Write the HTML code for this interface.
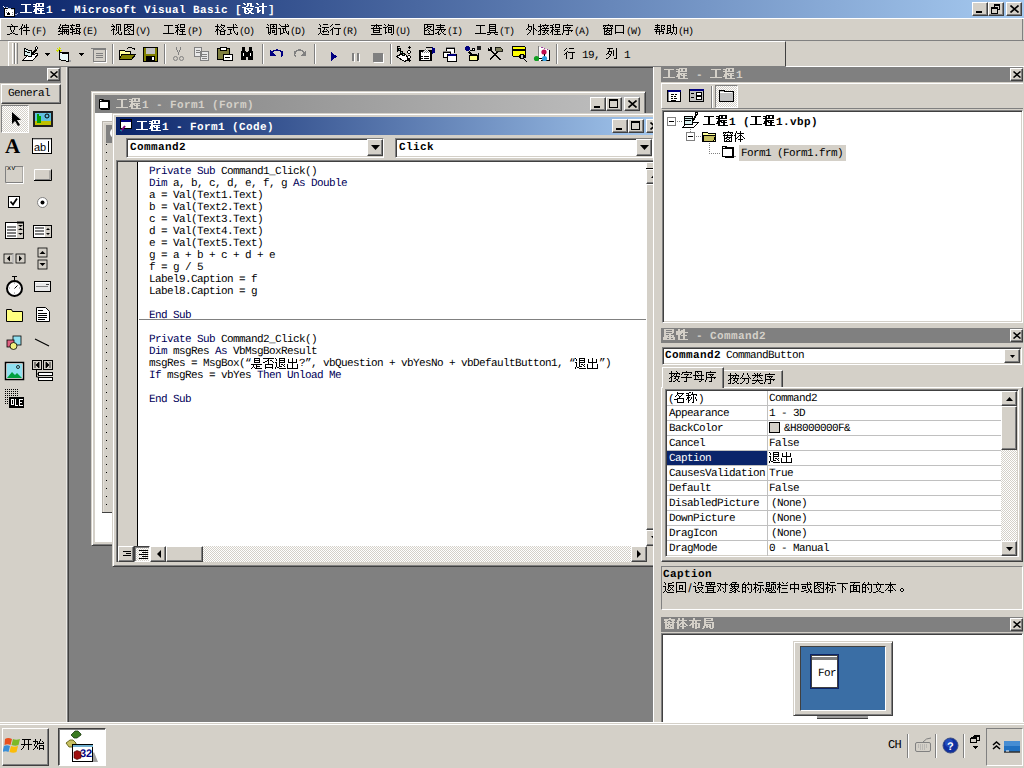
<!DOCTYPE html>
<html><head><meta charset="utf-8">
<style>
*{margin:0;padding:0;box-sizing:border-box}
html,body{text-rendering:geometricPrecision;width:1024px;height:768px;overflow:hidden;background:#D4D0C8;font-family:"Liberation Sans",sans-serif;font-size:12px;color:#000}
.a{position:absolute}
.m{font-family:"Liberation Mono",monospace}
.raised{background:#D4D0C8;border-top:1px solid #fff;border-left:1px solid #fff;border-right:1px solid #404040;border-bottom:1px solid #404040;box-shadow:inset -1px -1px 0 #808080}
.sunk{border-top:1px solid #808080;border-left:1px solid #808080;border-right:1px solid #fff;border-bottom:1px solid #fff;box-shadow:inset 1px 1px 0 #404040, inset -1px -1px 0 #D4D0C8}
.btn{background:#D4D0C8;border-top:1px solid #fff;border-left:1px solid #fff;border-right:1px solid #404040;border-bottom:1px solid #404040;box-shadow:inset -1px -1px 0 #808080}
.tbar{background:linear-gradient(to right,#0A246A,#A6CAF0);color:#fff;font-weight:bold}
.ibar{background:linear-gradient(to right,#808080,#C0C0C0);color:#D4D0C8;font-weight:bold}
.gbar{background:#808080;color:#D4D0C8;font-weight:bold}
.chk{background-color:#D4D0C8;background-image:linear-gradient(45deg,#fff 25%,transparent 25%,transparent 75%,#fff 75%),linear-gradient(45deg,#fff 25%,transparent 25%,transparent 75%,#fff 75%);background-size:2px 2px;background-position:0 0,1px 1px}
.code{font-family:"Liberation Mono",monospace;font-size:11px;letter-spacing:-0.6px;line-height:12px;white-space:pre;color:#000}
.kw{color:#000058}
.cj{display:inline-block;width:12px;font-family:"Liberation Sans",sans-serif;font-size:12px;letter-spacing:0;overflow:hidden;vertical-align:top;line-height:12px}
.mn{font-family:"Liberation Mono",monospace;font-size:10px;letter-spacing:-1px}
.pg{font-family:"Liberation Mono",monospace;font-size:11px;line-height:12px;letter-spacing:-0.6px;white-space:pre}
.pm{font-family:"Liberation Mono",monospace;font-size:11px;letter-spacing:-0.6px}
.tb{font-family:"Liberation Mono",monospace;font-size:11px;font-weight:bold;letter-spacing:0.4px;line-height:13px;white-space:pre}
.tr{font-family:"Liberation Mono",monospace;font-size:11px;letter-spacing:-0.6px;line-height:13px;white-space:pre}
.sep{width:2px;border-left:1px solid #808080;border-right:1px solid #fff}
.cg{display:inline-block;width:12px;height:12px;vertical-align:-2px;overflow:visible}.cgb{display:inline-block;width:13px;height:12px;vertical-align:-2px;overflow:visible}
</style></head><body>
<svg width="0" height="0" style="position:absolute"><defs><symbol id="g0" viewBox="0 0 14 12" width="14" height="12"><path d="M1 1h10v1h-10zM5 2h2v1h-2zM5 3h2v1h-2zM5 4h2v1h-2zM5 5h2v1h-2zM5 6h2v1h-2zM5 7h2v1h-2zM5 8h2v1h-2zM0 9h12v1h-12z" fill="currentColor"/></symbol><symbol id="g1" viewBox="0 0 14 12" width="14" height="12"><path d="M3 0h8v1h-8zM0 1h4v1h-4zM5 1h2v1h-2zM9 1h2v1h-2zM2 2h2v1h-2zM5 2h2v1h-2zM9 2h2v1h-2zM0 3h11v1h-11zM2 4h2v1h-2zM2 5h9v1h-9zM1 6h5v1h-5zM7 6h2v1h-2zM1 7h3v1h-3zM5 7h6v1h-6zM0 8h4v1h-4zM7 8h2v1h-2zM2 9h2v1h-2zM7 9h2v1h-2zM2 10h10v1h-10z" fill="currentColor"/></symbol><symbol id="g2" viewBox="0 0 14 12" width="14" height="12"><path d="M1 0h2v1h-2zM5 0h5v1h-5zM2 1h2v1h-2zM5 1h2v1h-2zM8 1h2v1h-2zM5 2h2v1h-2zM8 2h2v1h-2zM4 3h2v1h-2zM8 3h4v1h-4zM0 4h4v1h-4zM2 5h9v1h-9zM2 6h2v1h-2zM5 6h2v1h-2zM9 6h2v1h-2zM2 7h2v1h-2zM6 7h4v1h-4zM2 8h3v1h-3zM7 8h2v1h-2zM2 9h2v1h-2zM6 9h4v1h-4zM3 10h4v1h-4zM9 10h3v1h-3z" fill="currentColor"/></symbol><symbol id="g3" viewBox="0 0 14 12" width="14" height="12"><path d="M1 0h2v1h-2zM7 0h2v1h-2zM2 1h2v1h-2zM7 1h2v1h-2zM7 2h2v1h-2zM4 3h8v1h-8zM0 4h4v1h-4zM7 4h2v1h-2zM2 5h2v1h-2zM7 5h2v1h-2zM2 6h2v1h-2zM7 6h2v1h-2zM2 7h4v1h-4zM7 7h2v1h-2zM2 8h3v1h-3zM7 8h2v1h-2zM2 9h2v1h-2zM7 9h2v1h-2zM7 10h2v1h-2z" fill="currentColor"/></symbol><symbol id="g4" viewBox="0 0 14 12" width="14" height="12"><path d="M4 0h1v1h-1zM5 1h1v1h-1zM0 2h11v1h-11zM3 3h1v1h-1zM7 3h1v1h-1zM3 4h1v1h-1zM7 4h1v1h-1zM3 5h1v1h-1zM7 5h1v1h-1zM4 6h1v1h-1zM6 6h1v1h-1zM4 7h1v1h-1zM6 7h1v1h-1zM5 8h1v1h-1zM3 9h2v1h-2zM6 9h2v1h-2zM0 10h3v1h-3zM8 10h3v1h-3z" fill="currentColor"/></symbol><symbol id="g5" viewBox="0 0 14 12" width="14" height="12"><path d="M3 0h1v1h-1zM7 0h1v1h-1zM3 1h1v1h-1zM5 1h1v1h-1zM7 1h1v1h-1zM2 2h1v1h-1zM5 2h1v1h-1zM7 2h1v1h-1zM2 3h1v1h-1zM4 3h6v1h-6zM1 4h3v1h-3zM7 4h1v1h-1zM0 5h1v1h-1zM2 5h1v1h-1zM7 5h1v1h-1zM2 6h1v1h-1zM4 6h7v1h-7zM2 7h1v1h-1zM7 7h1v1h-1zM2 8h1v1h-1zM7 8h1v1h-1zM2 9h1v1h-1zM7 9h1v1h-1zM2 10h1v1h-1zM7 10h1v1h-1z" fill="currentColor"/></symbol><symbol id="g6" viewBox="0 0 14 12" width="14" height="12"><path d="M2 0h1v1h-1zM7 0h1v1h-1zM2 1h1v1h-1zM4 1h7v1h-7zM1 2h1v1h-1zM4 2h1v1h-1zM10 2h1v1h-1zM1 3h1v1h-1zM3 3h8v1h-8zM0 4h3v1h-3zM4 4h1v1h-1zM2 5h1v1h-1zM4 5h7v1h-7zM1 6h1v1h-1zM4 6h1v1h-1zM6 6h1v1h-1zM8 6h1v1h-1zM10 6h1v1h-1zM0 7h11v1h-11zM4 8h1v1h-1zM6 8h1v1h-1zM8 8h1v1h-1zM10 8h1v1h-1zM2 9h3v1h-3zM6 9h1v1h-1zM8 9h1v1h-1zM10 9h1v1h-1zM0 10h2v1h-2zM4 10h1v1h-1zM9 10h2v1h-2z" fill="currentColor"/></symbol><symbol id="g7" viewBox="0 0 14 12" width="14" height="12"><path d="M2 0h1v1h-1zM6 0h4v1h-4zM0 1h5v1h-5zM6 1h1v1h-1zM9 1h1v1h-1zM1 2h1v1h-1zM6 2h4v1h-4zM1 3h2v1h-2zM0 4h1v1h-1zM2 4h1v1h-1zM5 4h6v1h-6zM0 5h5v1h-5zM6 5h1v1h-1zM9 5h1v1h-1zM2 6h1v1h-1zM6 6h2v1h-2zM9 6h1v1h-1zM2 7h3v1h-3zM6 7h1v1h-1zM8 7h2v1h-2zM0 8h3v1h-3zM6 8h1v1h-1zM9 8h2v1h-2zM2 9h1v1h-1zM4 9h6v1h-6zM2 10h1v1h-1zM9 10h1v1h-1z" fill="currentColor"/></symbol><symbol id="g8" viewBox="0 0 14 12" width="14" height="12"><path d="M1 0h1v1h-1zM5 0h5v1h-5zM2 1h1v1h-1zM5 1h1v1h-1zM9 1h1v1h-1zM0 2h4v1h-4zM5 2h1v1h-1zM7 2h1v1h-1zM9 2h1v1h-1zM3 3h1v1h-1zM5 3h1v1h-1zM7 3h1v1h-1zM9 3h1v1h-1zM2 4h1v1h-1zM5 4h1v1h-1zM7 4h1v1h-1zM9 4h1v1h-1zM1 5h3v1h-3zM5 5h1v1h-1zM7 5h1v1h-1zM9 5h1v1h-1zM0 6h1v1h-1zM2 6h1v1h-1zM5 6h1v1h-1zM7 6h1v1h-1zM9 6h1v1h-1zM2 7h1v1h-1zM7 7h1v1h-1zM2 8h1v1h-1zM6 8h2v1h-2zM10 8h1v1h-1zM2 9h1v1h-1zM5 9h1v1h-1zM7 9h1v1h-1zM10 9h1v1h-1zM2 10h1v1h-1zM4 10h1v1h-1zM8 10h3v1h-3z" fill="currentColor"/></symbol><symbol id="g9" viewBox="0 0 14 12" width="14" height="12"><path d="M1 0h10v1h-10zM1 1h1v1h-1zM4 1h1v1h-1zM10 1h1v1h-1zM1 2h1v1h-1zM4 2h5v1h-5zM10 2h1v1h-1zM1 3h1v1h-1zM3 3h2v1h-2zM7 3h1v1h-1zM10 3h1v1h-1zM1 4h2v1h-2zM5 4h2v1h-2zM10 4h1v1h-1zM1 5h1v1h-1zM4 5h1v1h-1zM7 5h1v1h-1zM10 5h1v1h-1zM1 6h3v1h-3zM5 6h1v1h-1zM8 6h3v1h-3zM1 7h1v1h-1zM6 7h1v1h-1zM10 7h1v1h-1zM1 8h1v1h-1zM5 8h1v1h-1zM10 8h1v1h-1zM1 9h1v1h-1zM6 9h1v1h-1zM10 9h1v1h-1zM1 10h10v1h-10z" fill="currentColor"/></symbol><symbol id="g10" viewBox="0 0 14 12" width="14" height="12"><path d="M1 1h9v1h-9zM5 2h1v1h-1zM5 3h1v1h-1zM5 4h1v1h-1zM5 5h1v1h-1zM5 6h1v1h-1zM5 7h1v1h-1zM5 8h1v1h-1zM0 9h11v1h-11z" fill="currentColor"/></symbol><symbol id="g11" viewBox="0 0 14 12" width="14" height="12"><path d="M3 0h1v1h-1zM5 0h5v1h-5zM0 1h3v1h-3zM5 1h1v1h-1zM9 1h1v1h-1zM2 2h1v1h-1zM5 2h1v1h-1zM9 2h1v1h-1zM0 3h4v1h-4zM5 3h5v1h-5zM2 4h1v1h-1zM2 5h2v1h-2zM5 5h5v1h-5zM1 6h2v1h-2zM4 6h1v1h-1zM7 6h1v1h-1zM1 7h2v1h-2zM5 7h5v1h-5zM0 8h1v1h-1zM2 8h1v1h-1zM7 8h1v1h-1zM2 9h1v1h-1zM7 9h1v1h-1zM2 10h1v1h-1zM4 10h7v1h-7z" fill="currentColor"/></symbol><symbol id="g12" viewBox="0 0 14 12" width="14" height="12"><path d="M2 0h1v1h-1zM6 0h1v1h-1zM2 1h1v1h-1zM6 1h4v1h-4zM0 2h4v1h-4zM5 2h1v1h-1zM9 2h1v1h-1zM2 3h1v1h-1zM4 3h1v1h-1zM6 3h1v1h-1zM8 3h1v1h-1zM2 4h1v1h-1zM7 4h1v1h-1zM1 5h3v1h-3zM6 5h1v1h-1zM8 5h1v1h-1zM1 6h2v1h-2zM4 6h2v1h-2zM9 6h2v1h-2zM0 7h1v1h-1zM2 7h1v1h-1zM5 7h5v1h-5zM2 8h1v1h-1zM5 8h1v1h-1zM9 8h1v1h-1zM2 9h1v1h-1zM5 9h1v1h-1zM9 9h1v1h-1zM2 10h1v1h-1zM5 10h5v1h-5z" fill="currentColor"/></symbol><symbol id="g13" viewBox="0 0 14 12" width="14" height="12"><path d="M6 0h1v1h-1zM8 0h1v1h-1zM6 1h1v1h-1zM9 1h1v1h-1zM6 2h1v1h-1zM0 3h11v1h-11zM6 4h1v1h-1zM1 5h4v1h-4zM6 5h1v1h-1zM3 6h1v1h-1zM6 6h1v1h-1zM3 7h1v1h-1zM7 7h1v1h-1zM3 8h1v1h-1zM7 8h1v1h-1zM10 8h1v1h-1zM3 9h2v1h-2zM8 9h1v1h-1zM10 9h1v1h-1zM0 10h3v1h-3zM9 10h2v1h-2z" fill="currentColor"/></symbol><symbol id="g14" viewBox="0 0 14 12" width="14" height="12"><path d="M1 0h1v1h-1zM4 0h7v1h-7zM2 1h1v1h-1zM4 1h1v1h-1zM7 1h1v1h-1zM10 1h1v1h-1zM4 2h1v1h-1zM6 2h3v1h-3zM10 2h1v1h-1zM0 3h3v1h-3zM4 3h1v1h-1zM7 3h1v1h-1zM10 3h1v1h-1zM2 4h1v1h-1zM4 4h7v1h-7zM2 5h1v1h-1zM4 5h1v1h-1zM10 5h1v1h-1zM2 6h1v1h-1zM4 6h1v1h-1zM6 6h3v1h-3zM10 6h1v1h-1zM2 7h1v1h-1zM4 7h1v1h-1zM6 7h1v1h-1zM8 7h1v1h-1zM10 7h1v1h-1zM2 8h3v1h-3zM6 8h3v1h-3zM10 8h1v1h-1zM2 9h1v1h-1zM4 9h1v1h-1zM10 9h1v1h-1zM3 10h1v1h-1zM8 10h3v1h-3z" fill="currentColor"/></symbol><symbol id="g15" viewBox="0 0 14 12" width="14" height="12"><path d="M1 0h1v1h-1zM7 0h1v1h-1zM9 0h1v1h-1zM2 1h1v1h-1zM7 1h1v1h-1zM10 1h1v1h-1zM3 2h8v1h-8zM7 3h1v1h-1zM0 4h3v1h-3zM4 4h4v1h-4zM2 5h1v1h-1zM5 5h1v1h-1zM7 5h1v1h-1zM2 6h1v1h-1zM5 6h1v1h-1zM7 6h1v1h-1zM2 7h1v1h-1zM5 7h1v1h-1zM8 7h1v1h-1zM10 7h1v1h-1zM2 8h1v1h-1zM5 8h2v1h-2zM8 8h1v1h-1zM10 8h1v1h-1zM2 9h3v1h-3zM9 9h2v1h-2zM2 10h1v1h-1zM10 10h1v1h-1z" fill="currentColor"/></symbol><symbol id="g16" viewBox="0 0 14 12" width="14" height="12"><path d="M1 0h1v1h-1zM5 0h5v1h-5zM2 1h1v1h-1zM2 2h1v1h-1zM4 3h7v1h-7zM0 4h3v1h-3zM6 4h1v1h-1zM2 5h1v1h-1zM6 5h1v1h-1zM8 5h1v1h-1zM2 6h1v1h-1zM5 6h1v1h-1zM9 6h1v1h-1zM2 7h1v1h-1zM4 7h5v1h-5zM10 7h1v1h-1zM2 8h1v1h-1zM5 8h1v1h-1zM10 8h1v1h-1zM1 9h1v1h-1zM3 9h1v1h-1zM0 10h1v1h-1zM4 10h7v1h-7z" fill="currentColor"/></symbol><symbol id="g17" viewBox="0 0 14 12" width="14" height="12"><path d="M2 0h1v1h-1zM5 0h5v1h-5zM1 1h1v1h-1zM0 2h1v1h-1zM3 3h1v1h-1zM2 4h1v1h-1zM4 4h7v1h-7zM1 5h2v1h-2zM8 5h1v1h-1zM0 6h1v1h-1zM2 6h1v1h-1zM8 6h1v1h-1zM2 7h1v1h-1zM8 7h1v1h-1zM2 8h1v1h-1zM8 8h1v1h-1zM2 9h1v1h-1zM8 9h1v1h-1zM2 10h1v1h-1zM6 10h3v1h-3z" fill="currentColor"/></symbol><symbol id="g18" viewBox="0 0 14 12" width="14" height="12"><path d="M5 0h1v1h-1zM0 1h11v1h-11zM3 2h1v1h-1zM5 2h1v1h-1zM7 2h1v1h-1zM2 3h1v1h-1zM5 3h1v1h-1zM8 3h1v1h-1zM0 4h11v1h-11zM2 5h1v1h-1zM8 5h1v1h-1zM2 6h7v1h-7zM2 7h1v1h-1zM8 7h1v1h-1zM2 8h7v1h-7zM0 10h11v1h-11z" fill="currentColor"/></symbol><symbol id="g19" viewBox="0 0 14 12" width="14" height="12"><path d="M1 0h1v1h-1zM5 0h1v1h-1zM2 1h1v1h-1zM5 1h6v1h-6zM4 2h1v1h-1zM10 2h1v1h-1zM0 3h4v1h-4zM5 3h4v1h-4zM10 3h1v1h-1zM2 4h1v1h-1zM5 4h1v1h-1zM8 4h1v1h-1zM10 4h1v1h-1zM2 5h1v1h-1zM5 5h4v1h-4zM10 5h1v1h-1zM2 6h1v1h-1zM5 6h1v1h-1zM8 6h1v1h-1zM10 6h1v1h-1zM2 7h1v1h-1zM5 7h1v1h-1zM8 7h1v1h-1zM10 7h1v1h-1zM2 8h2v1h-2zM5 8h4v1h-4zM10 8h1v1h-1zM2 9h1v1h-1zM10 9h1v1h-1zM8 10h2v1h-2z" fill="currentColor"/></symbol><symbol id="g20" viewBox="0 0 14 12" width="14" height="12"><path d="M5 0h1v1h-1zM1 1h9v1h-9zM5 2h1v1h-1zM2 3h7v1h-7zM5 4h1v1h-1zM0 5h11v1h-11zM4 6h1v1h-1zM6 6h1v1h-1zM9 6h1v1h-1zM3 7h1v1h-1zM6 7h1v1h-1zM8 7h1v1h-1zM2 8h2v1h-2zM7 8h1v1h-1zM0 9h2v1h-2zM3 9h1v1h-1zM5 9h1v1h-1zM8 9h1v1h-1zM3 10h2v1h-2zM9 10h2v1h-2z" fill="currentColor"/></symbol><symbol id="g21" viewBox="0 0 14 12" width="14" height="12"><path d="M2 0h7v1h-7zM2 1h1v1h-1zM8 1h1v1h-1zM2 2h7v1h-7zM2 3h1v1h-1zM8 3h1v1h-1zM2 4h7v1h-7zM2 5h1v1h-1zM8 5h1v1h-1zM2 6h7v1h-7zM2 7h1v1h-1zM8 7h1v1h-1zM0 8h11v1h-11zM3 9h1v1h-1zM7 9h1v1h-1zM0 10h3v1h-3zM8 10h3v1h-3z" fill="currentColor"/></symbol><symbol id="g22" viewBox="0 0 14 12" width="14" height="12"><path d="M2 0h1v1h-1zM7 0h1v1h-1zM2 1h1v1h-1zM7 1h1v1h-1zM2 2h4v1h-4zM7 2h1v1h-1zM2 3h1v1h-1zM5 3h1v1h-1zM7 3h1v1h-1zM1 4h1v1h-1zM5 4h1v1h-1zM7 4h2v1h-2zM0 5h1v1h-1zM2 5h1v1h-1zM5 5h1v1h-1zM7 5h1v1h-1zM9 5h1v1h-1zM3 6h2v1h-2zM7 6h1v1h-1zM10 6h1v1h-1zM4 7h1v1h-1zM7 7h1v1h-1zM3 8h1v1h-1zM7 8h1v1h-1zM2 9h1v1h-1zM7 9h1v1h-1zM1 10h1v1h-1zM7 10h1v1h-1z" fill="currentColor"/></symbol><symbol id="g23" viewBox="0 0 14 12" width="14" height="12"><path d="M2 0h1v1h-1zM7 0h1v1h-1zM2 1h1v1h-1zM4 1h7v1h-7zM0 2h4v1h-4zM5 2h1v1h-1zM9 2h1v1h-1zM2 3h1v1h-1zM6 3h1v1h-1zM8 3h1v1h-1zM2 4h1v1h-1zM4 4h7v1h-7zM2 5h2v1h-2zM7 5h1v1h-1zM1 6h2v1h-2zM4 6h7v1h-7zM0 7h1v1h-1zM2 7h1v1h-1zM6 7h1v1h-1zM9 7h1v1h-1zM2 8h1v1h-1zM5 8h2v1h-2zM8 8h1v1h-1zM2 9h1v1h-1zM7 9h1v1h-1zM9 9h1v1h-1zM0 10h3v1h-3zM4 10h3v1h-3zM10 10h1v1h-1z" fill="currentColor"/></symbol><symbol id="g24" viewBox="0 0 14 12" width="14" height="12"><path d="M5 0h1v1h-1zM1 1h10v1h-10zM1 2h1v1h-1zM1 3h1v1h-1zM3 3h6v1h-6zM1 4h1v1h-1zM5 4h1v1h-1zM7 4h1v1h-1zM1 5h1v1h-1zM6 5h1v1h-1zM1 6h10v1h-10zM1 7h1v1h-1zM6 7h1v1h-1zM9 7h1v1h-1zM1 8h1v1h-1zM6 8h1v1h-1zM0 9h1v1h-1zM6 9h1v1h-1zM0 10h1v1h-1zM4 10h3v1h-3z" fill="currentColor"/></symbol><symbol id="g25" viewBox="0 0 14 12" width="14" height="12"><path d="M6 0h1v1h-1zM1 1h10v1h-10zM1 2h1v1h-1zM3 2h1v1h-1zM8 2h1v1h-1zM10 2h1v1h-1zM2 3h1v1h-1zM5 3h1v1h-1zM9 3h1v1h-1zM1 4h10v1h-10zM2 5h1v1h-1zM5 5h1v1h-1zM9 5h1v1h-1zM2 6h1v1h-1zM4 6h6v1h-6zM2 7h3v1h-3zM7 7h1v1h-1zM9 7h1v1h-1zM2 8h1v1h-1zM5 8h2v1h-2zM9 8h1v1h-1zM2 9h1v1h-1zM4 9h1v1h-1zM7 9h1v1h-1zM9 9h1v1h-1zM2 10h8v1h-8z" fill="currentColor"/></symbol><symbol id="g26" viewBox="0 0 14 12" width="14" height="12"><path d="M1 1h9v1h-9zM1 2h1v1h-1zM9 2h1v1h-1zM1 3h1v1h-1zM9 3h1v1h-1zM1 4h1v1h-1zM9 4h1v1h-1zM1 5h1v1h-1zM9 5h1v1h-1zM1 6h1v1h-1zM9 6h1v1h-1zM1 7h1v1h-1zM9 7h1v1h-1zM1 8h9v1h-9zM1 9h1v1h-1zM9 9h1v1h-1z" fill="currentColor"/></symbol><symbol id="g27" viewBox="0 0 14 12" width="14" height="12"><path d="M3 0h1v1h-1zM1 1h5v1h-5zM7 1h4v1h-4zM3 2h1v1h-1zM7 2h1v1h-1zM10 2h1v1h-1zM1 3h5v1h-5zM7 3h1v1h-1zM9 3h1v1h-1zM3 4h1v1h-1zM7 4h1v1h-1zM10 4h1v1h-1zM0 5h6v1h-6zM7 5h4v1h-4zM2 6h1v1h-1zM5 6h1v1h-1zM7 6h1v1h-1zM1 7h9v1h-9zM2 8h1v1h-1zM5 8h1v1h-1zM9 8h1v1h-1zM2 9h1v1h-1zM5 9h1v1h-1zM8 9h2v1h-2zM5 10h1v1h-1z" fill="currentColor"/></symbol><symbol id="g28" viewBox="0 0 14 12" width="14" height="12"><path d="M7 0h1v1h-1zM1 1h4v1h-4zM7 1h1v1h-1zM1 2h1v1h-1zM4 2h1v1h-1zM7 2h1v1h-1zM1 3h1v1h-1zM4 3h1v1h-1zM6 3h5v1h-5zM1 4h4v1h-4zM7 4h1v1h-1zM10 4h1v1h-1zM1 5h1v1h-1zM4 5h1v1h-1zM7 5h1v1h-1zM10 5h1v1h-1zM1 6h4v1h-4zM7 6h1v1h-1zM10 6h1v1h-1zM1 7h1v1h-1zM4 7h1v1h-1zM7 7h1v1h-1zM10 7h1v1h-1zM1 8h1v1h-1zM3 8h4v1h-4zM10 8h1v1h-1zM0 9h3v1h-3zM6 9h1v1h-1zM8 9h1v1h-1zM10 9h1v1h-1zM5 10h1v1h-1zM9 10h1v1h-1z" fill="currentColor"/></symbol><symbol id="g29" viewBox="0 0 14 12" width="14" height="12"><path d="M1 0h6v1h-6zM10 0h1v1h-1zM3 1h1v1h-1zM10 1h1v1h-1zM3 2h1v1h-1zM7 2h1v1h-1zM10 2h1v1h-1zM2 3h4v1h-4zM7 3h1v1h-1zM10 3h1v1h-1zM2 4h1v1h-1zM5 4h1v1h-1zM7 4h1v1h-1zM10 4h1v1h-1zM1 5h2v1h-2zM5 5h1v1h-1zM7 5h1v1h-1zM10 5h1v1h-1zM0 6h1v1h-1zM3 6h2v1h-2zM7 6h1v1h-1zM10 6h1v1h-1zM4 7h1v1h-1zM7 7h1v1h-1zM10 7h1v1h-1zM3 8h1v1h-1zM10 8h1v1h-1zM2 9h1v1h-1zM10 9h1v1h-1zM0 10h2v1h-2zM8 10h3v1h-3z" fill="currentColor"/></symbol><symbol id="g30" viewBox="0 0 14 12" width="14" height="12"><path d="M3 0h6v1h-6zM3 1h1v1h-1zM8 1h1v1h-1zM3 2h6v1h-6zM3 3h1v1h-1zM8 3h1v1h-1zM3 4h6v1h-6zM0 6h11v1h-11zM2 7h1v1h-1zM5 7h1v1h-1zM2 8h1v1h-1zM5 8h4v1h-4zM1 9h1v1h-1zM3 9h1v1h-1zM5 9h1v1h-1zM0 10h1v1h-1zM4 10h7v1h-7z" fill="currentColor"/></symbol><symbol id="g31" viewBox="0 0 14 12" width="14" height="12"><path d="M0 0h11v1h-11zM5 1h1v1h-1zM4 2h2v1h-2zM7 2h2v1h-2zM2 3h2v1h-2zM5 3h1v1h-1zM9 3h1v1h-1zM0 4h2v1h-2zM5 4h1v1h-1zM10 4h1v1h-1zM5 5h1v1h-1zM2 6h8v1h-8zM2 7h1v1h-1zM9 7h1v1h-1zM2 8h1v1h-1zM9 8h1v1h-1zM2 9h8v1h-8zM2 10h1v1h-1zM9 10h1v1h-1z" fill="currentColor"/></symbol><symbol id="g32" viewBox="0 0 14 12" width="14" height="12"><path d="M0 0h1v1h-1zM4 0h6v1h-6zM1 1h1v1h-1zM4 1h1v1h-1zM9 1h1v1h-1zM1 2h1v1h-1zM4 2h6v1h-6zM4 3h1v1h-1zM9 3h1v1h-1zM0 4h2v1h-2zM4 4h6v1h-6zM1 5h1v1h-1zM4 5h1v1h-1zM1 6h1v1h-1zM4 6h1v1h-1zM6 6h2v1h-2zM9 6h1v1h-1zM1 7h1v1h-1zM4 7h1v1h-1zM8 7h1v1h-1zM1 8h1v1h-1zM4 8h3v1h-3zM9 8h1v1h-1zM0 9h1v1h-1zM2 9h2v1h-2zM0 10h1v1h-1zM4 10h7v1h-7z" fill="currentColor"/></symbol><symbol id="g33" viewBox="0 0 14 12" width="14" height="12"><path d="M5 0h1v1h-1zM1 1h1v1h-1zM5 1h1v1h-1zM9 1h1v1h-1zM1 2h1v1h-1zM5 2h1v1h-1zM9 2h1v1h-1zM1 3h1v1h-1zM5 3h1v1h-1zM9 3h1v1h-1zM1 4h9v1h-9zM5 5h1v1h-1zM0 6h1v1h-1zM5 6h1v1h-1zM10 6h1v1h-1zM0 7h1v1h-1zM5 7h1v1h-1zM10 7h1v1h-1zM0 8h1v1h-1zM5 8h1v1h-1zM10 8h1v1h-1zM0 9h1v1h-1zM5 9h1v1h-1zM10 9h1v1h-1zM0 10h11v1h-11z" fill="currentColor"/></symbol><symbol id="g34" viewBox="0 0 14 12" width="14" height="12"><path d="M2 0h1v1h-1zM6 0h1v1h-1zM2 1h1v1h-1zM6 1h1v1h-1zM1 2h1v1h-1zM3 2h7v1h-7zM1 3h1v1h-1zM6 3h1v1h-1zM0 4h2v1h-2zM5 4h3v1h-3zM1 5h1v1h-1zM4 5h1v1h-1zM6 5h1v1h-1zM8 5h1v1h-1zM1 6h1v1h-1zM3 6h1v1h-1zM6 6h1v1h-1zM9 6h1v1h-1zM1 7h2v1h-2zM6 7h1v1h-1zM10 7h1v1h-1zM1 8h1v1h-1zM4 8h5v1h-5zM1 9h1v1h-1zM6 9h1v1h-1zM1 10h1v1h-1zM6 10h1v1h-1z" fill="currentColor"/></symbol><symbol id="g35" viewBox="0 0 14 12" width="14" height="12"><path d="M1 0h10v1h-10zM1 1h2v1h-2zM9 1h2v1h-2zM1 2h10v1h-10zM1 3h2v1h-2zM9 3h2v1h-2zM1 4h9v1h-9zM1 5h2v1h-2zM6 5h2v1h-2zM1 6h10v1h-10zM1 7h4v1h-4zM6 7h2v1h-2zM9 7h2v1h-2zM0 8h12v1h-12zM0 9h4v1h-4zM6 9h2v1h-2zM10 9h2v1h-2zM0 10h12v1h-12z" fill="currentColor"/></symbol><symbol id="g36" viewBox="0 0 14 12" width="14" height="12"><path d="M2 0h2v1h-2zM7 0h2v1h-2zM2 1h2v1h-2zM5 1h4v1h-4zM0 2h9v1h-9zM0 3h12v1h-12zM0 4h6v1h-6zM7 4h2v1h-2zM0 5h5v1h-5zM7 5h2v1h-2zM2 6h2v1h-2zM5 6h6v1h-6zM2 7h2v1h-2zM7 7h2v1h-2zM2 8h2v1h-2zM7 8h2v1h-2zM2 9h2v1h-2zM7 9h2v1h-2zM2 10h10v1h-10z" fill="currentColor"/></symbol><symbol id="g37" viewBox="0 0 14 12" width="14" height="12"><path d="M2 0h1v1h-1zM7 0h1v1h-1zM2 1h1v1h-1zM8 1h1v1h-1zM0 2h11v1h-11zM2 3h1v1h-1zM5 3h1v1h-1zM7 3h1v1h-1zM10 3h1v1h-1zM2 4h1v1h-1zM4 4h1v1h-1zM7 4h1v1h-1zM2 5h2v1h-2zM5 5h6v1h-6zM1 6h2v1h-2zM6 6h1v1h-1zM9 6h1v1h-1zM0 7h1v1h-1zM2 7h1v1h-1zM5 7h2v1h-2zM9 7h1v1h-1zM2 8h1v1h-1zM7 8h2v1h-2zM2 9h1v1h-1zM6 9h1v1h-1zM8 9h1v1h-1zM0 10h3v1h-3zM4 10h2v1h-2zM9 10h2v1h-2z" fill="currentColor"/></symbol><symbol id="g38" viewBox="0 0 14 12" width="14" height="12"><path d="M3 0h1v1h-1zM7 0h1v1h-1zM3 1h1v1h-1zM7 1h1v1h-1zM2 2h1v1h-1zM8 2h1v1h-1zM2 3h1v1h-1zM8 3h1v1h-1zM1 4h1v1h-1zM9 4h1v1h-1zM0 5h1v1h-1zM2 5h7v1h-7zM10 5h1v1h-1zM4 6h1v1h-1zM8 6h1v1h-1zM4 7h1v1h-1zM8 7h1v1h-1zM3 8h1v1h-1zM8 8h1v1h-1zM2 9h1v1h-1zM8 9h1v1h-1zM0 10h2v1h-2zM6 10h2v1h-2z" fill="currentColor"/></symbol><symbol id="g39" viewBox="0 0 14 12" width="14" height="12"><path d="M2 0h1v1h-1zM5 0h1v1h-1zM8 0h1v1h-1zM3 1h1v1h-1zM5 1h1v1h-1zM7 1h1v1h-1zM0 2h11v1h-11zM3 3h1v1h-1zM5 3h1v1h-1zM7 3h1v1h-1zM2 4h1v1h-1zM5 4h1v1h-1zM8 4h1v1h-1zM1 5h1v1h-1zM9 5h1v1h-1zM5 6h1v1h-1zM0 7h11v1h-11zM4 8h1v1h-1zM6 8h1v1h-1zM3 9h1v1h-1zM7 9h1v1h-1zM0 10h3v1h-3zM8 10h3v1h-3z" fill="currentColor"/></symbol><symbol id="g40" viewBox="0 0 14 12" width="14" height="12"><path d="M5 0h1v1h-1zM1 1h10v1h-10zM1 2h1v1h-1zM10 2h1v1h-1zM0 3h1v1h-1zM3 3h5v1h-5zM9 3h1v1h-1zM6 4h1v1h-1zM5 5h1v1h-1zM0 6h11v1h-11zM5 7h1v1h-1zM5 8h1v1h-1zM5 9h1v1h-1zM3 10h3v1h-3z" fill="currentColor"/></symbol><symbol id="g41" viewBox="0 0 14 12" width="14" height="12"><path d="M2 0h7v1h-7zM2 1h1v1h-1zM4 1h1v1h-1zM8 1h1v1h-1zM2 2h1v1h-1zM5 2h1v1h-1zM8 2h1v1h-1zM2 3h1v1h-1zM8 3h1v1h-1zM0 4h11v1h-11zM2 5h1v1h-1zM4 5h1v1h-1zM8 5h1v1h-1zM2 6h1v1h-1zM5 6h1v1h-1zM8 6h1v1h-1zM2 7h1v1h-1zM8 7h1v1h-1zM1 8h10v1h-10zM8 9h1v1h-1zM6 10h2v1h-2z" fill="currentColor"/></symbol><symbol id="g42" viewBox="0 0 14 12" width="14" height="12"><path d="M3 0h1v1h-1zM3 1h7v1h-7zM3 2h1v1h-1zM8 2h1v1h-1zM2 3h1v1h-1zM4 3h1v1h-1zM7 3h1v1h-1zM1 4h1v1h-1zM5 4h2v1h-2zM5 5h1v1h-1zM3 6h7v1h-7zM0 7h4v1h-4zM9 7h1v1h-1zM3 8h1v1h-1zM9 8h1v1h-1zM3 9h1v1h-1zM9 9h1v1h-1zM3 10h7v1h-7z" fill="currentColor"/></symbol><symbol id="g43" viewBox="0 0 14 12" width="14" height="12"><path d="M3 0h2v1h-2zM6 0h1v1h-1zM0 1h3v1h-3zM6 1h1v1h-1zM2 2h1v1h-1zM5 2h6v1h-6zM0 3h5v1h-5zM7 3h1v1h-1zM10 3h1v1h-1zM2 4h1v1h-1zM7 4h1v1h-1zM1 5h3v1h-3zM5 5h1v1h-1zM7 5h1v1h-1zM9 5h1v1h-1zM1 6h2v1h-2zM5 6h1v1h-1zM7 6h1v1h-1zM9 6h1v1h-1zM0 7h1v1h-1zM2 7h1v1h-1zM4 7h1v1h-1zM7 7h1v1h-1zM10 7h1v1h-1zM2 8h2v1h-2zM7 8h1v1h-1zM10 8h1v1h-1zM2 9h1v1h-1zM7 9h1v1h-1zM2 10h1v1h-1zM6 10h2v1h-2z" fill="currentColor"/></symbol><symbol id="g44" viewBox="0 0 14 12" width="14" height="12"><path d="M1 0h1v1h-1zM9 0h2v1h-2zM2 1h1v1h-1zM5 1h4v1h-4zM2 2h1v1h-1zM5 2h1v1h-1zM5 3h6v1h-6zM0 4h3v1h-3zM5 4h2v1h-2zM10 4h1v1h-1zM2 5h1v1h-1zM5 5h1v1h-1zM7 5h1v1h-1zM9 5h1v1h-1zM2 6h1v1h-1zM5 6h1v1h-1zM8 6h1v1h-1zM2 7h1v1h-1zM4 7h1v1h-1zM7 7h1v1h-1zM9 7h1v1h-1zM2 8h1v1h-1zM5 8h2v1h-2zM10 8h1v1h-1zM1 9h1v1h-1zM3 9h1v1h-1zM0 10h1v1h-1zM4 10h7v1h-7z" fill="currentColor"/></symbol><symbol id="g45" viewBox="0 0 14 12" width="14" height="12"><path d="M1 0h10v1h-10zM1 1h1v1h-1zM10 1h1v1h-1zM1 2h1v1h-1zM10 2h1v1h-1zM1 3h1v1h-1zM4 3h4v1h-4zM10 3h1v1h-1zM1 4h1v1h-1zM4 4h1v1h-1zM7 4h1v1h-1zM10 4h1v1h-1zM1 5h1v1h-1zM4 5h1v1h-1zM7 5h1v1h-1zM10 5h1v1h-1zM1 6h1v1h-1zM4 6h4v1h-4zM10 6h1v1h-1zM1 7h1v1h-1zM4 7h1v1h-1zM7 7h1v1h-1zM10 7h1v1h-1zM1 8h1v1h-1zM10 8h1v1h-1zM1 9h10v1h-10zM1 10h1v1h-1zM10 10h1v1h-1z" fill="currentColor"/></symbol><symbol id="g46" viewBox="0 0 14 12" width="14" height="12"><path d="M1 0h1v1h-1zM5 0h4v1h-4zM2 1h1v1h-1zM5 1h1v1h-1zM8 1h1v1h-1zM5 2h1v1h-1zM8 2h1v1h-1zM4 3h1v1h-1zM8 3h3v1h-3zM0 4h3v1h-3zM2 5h1v1h-1zM4 5h6v1h-6zM2 6h1v1h-1zM5 6h1v1h-1zM9 6h1v1h-1zM2 7h1v1h-1zM6 7h1v1h-1zM8 7h1v1h-1zM2 8h2v1h-2zM7 8h1v1h-1zM2 9h1v1h-1zM6 9h1v1h-1zM8 9h1v1h-1zM3 10h3v1h-3zM9 10h2v1h-2z" fill="currentColor"/></symbol><symbol id="g47" viewBox="0 0 14 12" width="14" height="12"><path d="M1 0h9v1h-9zM1 1h1v1h-1zM4 1h1v1h-1zM6 1h1v1h-1zM9 1h1v1h-1zM1 2h9v1h-9zM5 3h1v1h-1zM0 4h11v1h-11zM2 5h1v1h-1zM8 5h1v1h-1zM2 6h7v1h-7zM2 7h1v1h-1zM8 7h1v1h-1zM2 8h7v1h-7zM2 9h1v1h-1zM8 9h1v1h-1zM0 10h11v1h-11z" fill="currentColor"/></symbol><symbol id="g48" viewBox="0 0 14 12" width="14" height="12"><path d="M8 0h1v1h-1zM0 1h4v1h-4zM8 1h1v1h-1zM3 2h8v1h-8zM0 3h1v1h-1zM3 3h1v1h-1zM8 3h1v1h-1zM1 4h1v1h-1zM3 4h1v1h-1zM8 4h1v1h-1zM2 5h1v1h-1zM5 5h1v1h-1zM8 5h1v1h-1zM2 6h1v1h-1zM6 6h1v1h-1zM8 6h1v1h-1zM1 7h1v1h-1zM3 7h1v1h-1zM8 7h1v1h-1zM1 8h1v1h-1zM3 8h1v1h-1zM8 8h1v1h-1zM0 9h1v1h-1zM6 9h1v1h-1zM8 9h1v1h-1zM7 10h1v1h-1z" fill="currentColor"/></symbol><symbol id="g49" viewBox="0 0 14 12" width="14" height="12"><path d="M3 0h5v1h-5zM2 1h1v1h-1zM6 1h1v1h-1zM1 2h9v1h-9zM0 3h1v1h-1zM2 3h1v1h-1zM5 3h1v1h-1zM9 3h1v1h-1zM2 4h8v1h-8zM3 5h1v1h-1zM5 5h1v1h-1zM9 5h1v1h-1zM1 6h2v1h-2zM4 6h3v1h-3zM8 6h1v1h-1zM3 7h1v1h-1zM6 7h2v1h-2zM1 8h2v1h-2zM5 8h2v1h-2zM8 8h1v1h-1zM3 9h2v1h-2zM6 9h1v1h-1zM9 9h2v1h-2zM0 10h3v1h-3zM5 10h2v1h-2z" fill="currentColor"/></symbol><symbol id="g50" viewBox="0 0 14 12" width="14" height="12"><path d="M3 0h1v1h-1zM7 0h1v1h-1zM2 1h1v1h-1zM7 1h1v1h-1zM1 2h4v1h-4zM6 2h5v1h-5zM1 3h1v1h-1zM4 3h2v1h-2zM10 3h1v1h-1zM1 4h1v1h-1zM4 4h1v1h-1zM10 4h1v1h-1zM1 5h4v1h-4zM6 5h1v1h-1zM10 5h1v1h-1zM1 6h1v1h-1zM4 6h1v1h-1zM7 6h1v1h-1zM10 6h1v1h-1zM1 7h1v1h-1zM4 7h1v1h-1zM7 7h1v1h-1zM10 7h1v1h-1zM1 8h1v1h-1zM4 8h1v1h-1zM10 8h1v1h-1zM1 9h4v1h-4zM10 9h1v1h-1zM1 10h1v1h-1zM4 10h1v1h-1zM8 10h2v1h-2z" fill="currentColor"/></symbol><symbol id="g51" viewBox="0 0 14 12" width="14" height="12"><path d="M2 0h1v1h-1zM5 0h5v1h-5zM2 1h1v1h-1zM0 2h5v1h-5zM2 3h1v1h-1zM4 3h7v1h-7zM2 4h1v1h-1zM7 4h1v1h-1zM1 5h3v1h-3zM7 5h1v1h-1zM1 6h2v1h-2zM5 6h1v1h-1zM7 6h1v1h-1zM9 6h1v1h-1zM0 7h1v1h-1zM2 7h1v1h-1zM5 7h1v1h-1zM7 7h1v1h-1zM10 7h1v1h-1zM2 8h1v1h-1zM4 8h1v1h-1zM7 8h1v1h-1zM10 8h1v1h-1zM2 9h1v1h-1zM7 9h1v1h-1zM2 10h1v1h-1zM6 10h2v1h-2z" fill="currentColor"/></symbol><symbol id="g52" viewBox="0 0 14 12" width="14" height="12"><path d="M1 0h4v1h-4zM6 0h5v1h-5zM1 1h1v1h-1zM4 1h1v1h-1zM8 1h1v1h-1zM1 2h4v1h-4zM6 2h5v1h-5zM1 3h1v1h-1zM4 3h1v1h-1zM6 3h1v1h-1zM10 3h1v1h-1zM1 4h4v1h-4zM6 4h1v1h-1zM8 4h1v1h-1zM10 4h1v1h-1zM6 5h1v1h-1zM8 5h1v1h-1zM10 5h1v1h-1zM0 6h7v1h-7zM8 6h1v1h-1zM10 6h1v1h-1zM1 7h1v1h-1zM3 7h1v1h-1zM6 7h1v1h-1zM8 7h1v1h-1zM1 8h1v1h-1zM3 8h3v1h-3zM7 8h1v1h-1zM9 8h1v1h-1zM0 9h1v1h-1zM2 9h2v1h-2zM6 9h1v1h-1zM10 9h1v1h-1zM0 10h1v1h-1zM4 10h7v1h-7z" fill="currentColor"/></symbol><symbol id="g53" viewBox="0 0 14 12" width="14" height="12"><path d="M2 0h1v1h-1zM5 0h1v1h-1zM10 0h1v1h-1zM2 1h1v1h-1zM6 1h1v1h-1zM9 1h1v1h-1zM0 2h4v1h-4zM2 3h1v1h-1zM4 3h7v1h-7zM1 4h2v1h-2zM1 5h3v1h-3zM0 6h1v1h-1zM2 6h1v1h-1zM5 6h5v1h-5zM0 7h1v1h-1zM2 7h1v1h-1zM2 8h1v1h-1zM2 9h1v1h-1zM2 10h1v1h-1zM4 10h7v1h-7z" fill="currentColor"/></symbol><symbol id="g54" viewBox="0 0 14 12" width="14" height="12"><path d="M5 0h1v1h-1zM5 1h1v1h-1zM1 2h9v1h-9zM1 3h1v1h-1zM5 3h1v1h-1zM9 3h1v1h-1zM1 4h1v1h-1zM5 4h1v1h-1zM9 4h1v1h-1zM1 5h1v1h-1zM5 5h1v1h-1zM9 5h1v1h-1zM1 6h9v1h-9zM1 7h1v1h-1zM5 7h1v1h-1zM9 7h1v1h-1zM5 8h1v1h-1zM5 9h1v1h-1zM5 10h1v1h-1z" fill="currentColor"/></symbol><symbol id="g55" viewBox="0 0 14 12" width="14" height="12"><path d="M6 0h1v1h-1zM8 0h1v1h-1zM6 1h1v1h-1zM9 1h1v1h-1zM0 2h11v1h-11zM6 3h1v1h-1zM1 4h4v1h-4zM6 4h1v1h-1zM9 4h1v1h-1zM1 5h1v1h-1zM4 5h1v1h-1zM6 5h1v1h-1zM9 5h1v1h-1zM1 6h4v1h-4zM7 6h1v1h-1zM9 6h1v1h-1zM7 7h2v1h-2zM3 8h3v1h-3zM8 8h1v1h-1zM10 8h1v1h-1zM0 9h3v1h-3zM7 9h1v1h-1zM9 9h2v1h-2zM5 10h2v1h-2zM10 10h1v1h-1z" fill="currentColor"/></symbol><symbol id="g56" viewBox="0 0 14 12" width="14" height="12"><path d="M0 1h11v1h-11zM5 2h1v1h-1zM5 3h1v1h-1zM5 4h2v1h-2zM5 5h1v1h-1zM7 5h1v1h-1zM5 6h1v1h-1zM8 6h1v1h-1zM5 7h1v1h-1zM8 7h1v1h-1zM5 8h1v1h-1zM5 9h1v1h-1zM5 10h1v1h-1z" fill="currentColor"/></symbol><symbol id="g57" viewBox="0 0 14 12" width="14" height="12"><path d="M1 0h10v1h-10zM5 1h1v1h-1zM4 2h1v1h-1zM1 3h10v1h-10zM1 4h1v1h-1zM4 4h1v1h-1zM7 4h1v1h-1zM10 4h1v1h-1zM1 5h1v1h-1zM4 5h4v1h-4zM10 5h1v1h-1zM1 6h1v1h-1zM4 6h1v1h-1zM7 6h1v1h-1zM10 6h1v1h-1zM1 7h1v1h-1zM4 7h4v1h-4zM10 7h1v1h-1zM1 8h1v1h-1zM4 8h1v1h-1zM7 8h1v1h-1zM10 8h1v1h-1zM1 9h10v1h-10zM1 10h1v1h-1zM10 10h1v1h-1z" fill="currentColor"/></symbol><symbol id="g58" viewBox="0 0 14 12" width="14" height="12"><path d="M5 0h1v1h-1zM5 1h1v1h-1zM0 2h11v1h-11zM4 3h3v1h-3zM3 4h1v1h-1zM5 4h1v1h-1zM7 4h1v1h-1zM3 5h1v1h-1zM5 5h1v1h-1zM7 5h1v1h-1zM2 6h1v1h-1zM5 6h1v1h-1zM8 6h1v1h-1zM1 7h1v1h-1zM5 7h1v1h-1zM9 7h1v1h-1zM0 8h1v1h-1zM3 8h5v1h-5zM10 8h1v1h-1zM5 9h1v1h-1zM5 10h1v1h-1z" fill="currentColor"/></symbol><symbol id="g59" viewBox="0 0 14 12" width="14" height="12"><path d="M4 6h2v1h-2zM3 7h1v1h-1zM6 7h1v1h-1zM3 8h1v1h-1zM6 8h1v1h-1zM4 9h2v1h-2z" fill="currentColor"/></symbol><symbol id="g60" viewBox="0 0 14 12" width="14" height="12"><path d="M6 0h2v1h-2zM1 1h11v1h-11zM1 2h4v1h-4zM8 2h4v1h-4zM2 3h2v1h-2zM5 3h2v1h-2zM9 3h2v1h-2zM1 4h11v1h-11zM2 5h2v1h-2zM5 5h2v1h-2zM9 5h2v1h-2zM2 6h9v1h-9zM2 7h4v1h-4zM7 7h4v1h-4zM2 8h2v1h-2zM5 8h3v1h-3zM9 8h2v1h-2zM2 9h4v1h-4zM7 9h4v1h-4zM2 10h9v1h-9z" fill="currentColor"/></symbol><symbol id="g61" viewBox="0 0 14 12" width="14" height="12"><path d="M2 0h2v1h-2zM6 0h2v1h-2zM2 1h2v1h-2zM6 1h2v1h-2zM1 2h10v1h-10zM1 3h2v1h-2zM6 3h2v1h-2zM0 4h3v1h-3zM5 4h4v1h-4zM1 5h2v1h-2zM4 5h6v1h-6zM1 6h4v1h-4zM6 6h2v1h-2zM9 6h2v1h-2zM1 7h3v1h-3zM6 7h2v1h-2zM10 7h2v1h-2zM1 8h2v1h-2zM4 8h6v1h-6zM1 9h2v1h-2zM6 9h2v1h-2zM1 10h2v1h-2zM6 10h2v1h-2z" fill="currentColor"/></symbol><symbol id="g62" viewBox="0 0 14 12" width="14" height="12"><path d="M4 0h2v1h-2zM4 1h2v1h-2zM0 2h12v1h-12zM3 3h2v1h-2zM6 3h2v1h-2zM3 4h2v1h-2zM6 4h2v1h-2zM2 5h9v1h-9zM1 6h4v1h-4zM6 6h2v1h-2zM9 6h2v1h-2zM0 7h2v1h-2zM3 7h2v1h-2zM6 7h2v1h-2zM9 7h2v1h-2zM3 8h2v1h-2zM6 8h2v1h-2zM9 8h2v1h-2zM3 9h2v1h-2zM6 9h5v1h-5zM6 10h2v1h-2z" fill="currentColor"/></symbol><symbol id="g63" viewBox="0 0 14 12" width="14" height="12"><path d="M2 0h9v1h-9zM2 1h2v1h-2zM9 1h2v1h-2zM2 2h9v1h-9zM2 3h2v1h-2zM2 4h10v1h-10zM2 5h2v1h-2zM10 5h2v1h-2zM2 6h7v1h-7zM10 6h2v1h-2zM2 7h4v1h-4zM7 7h2v1h-2zM10 7h2v1h-2zM1 8h2v1h-2zM4 8h5v1h-5zM10 8h2v1h-2zM1 9h2v1h-2zM4 9h2v1h-2zM7 9h2v1h-2zM10 9h2v1h-2zM0 10h2v1h-2zM8 10h3v1h-3z" fill="currentColor"/></symbol><symbol id="g64" viewBox="0 0 14 12" width="14" height="12"><path d="M1 0h9v1h-9zM3 1h1v1h-1zM7 1h1v1h-1zM3 2h1v1h-1zM7 2h1v1h-1zM3 3h1v1h-1zM7 3h1v1h-1zM3 4h1v1h-1zM7 4h1v1h-1zM0 5h11v1h-11zM3 6h1v1h-1zM7 6h1v1h-1zM2 7h1v1h-1zM7 7h1v1h-1zM2 8h1v1h-1zM7 8h1v1h-1zM1 9h1v1h-1zM7 9h1v1h-1zM0 10h1v1h-1zM7 10h1v1h-1z" fill="currentColor"/></symbol><symbol id="g65" viewBox="0 0 14 12" width="14" height="12"><path d="M2 0h1v1h-1zM7 0h1v1h-1zM2 1h1v1h-1zM7 1h1v1h-1zM0 2h5v1h-5zM6 2h1v1h-1zM9 2h1v1h-1zM2 3h1v1h-1zM4 3h1v1h-1zM6 3h1v1h-1zM10 3h1v1h-1zM2 4h1v1h-1zM4 4h7v1h-7zM1 5h1v1h-1zM4 5h1v1h-1zM1 6h1v1h-1zM3 6h1v1h-1zM6 6h5v1h-5zM2 7h2v1h-2zM6 7h1v1h-1zM10 7h1v1h-1zM2 8h1v1h-1zM4 8h1v1h-1zM6 8h1v1h-1zM10 8h1v1h-1zM1 9h1v1h-1zM4 9h1v1h-1zM6 9h5v1h-5zM0 10h1v1h-1zM6 10h1v1h-1zM10 10h1v1h-1z" fill="currentColor"/></symbol></defs></svg>

<!-- Title bar -->
<div class="a tbar" style="left:0;top:0;width:1024px;height:18px"></div>
<svg class="a" style="left:0;top:0" width="20" height="18" viewBox="0 0 20 18" shape-rendering="crispEdges">
<path d="M4 8h11v9h-11z" fill="#000"/><path d="M5 9h9v7h-9z" fill="#fff"/>
<path d="M6 10h1v1h-1zM6 12h1v1h-1zM12 12h1v1h-1zM12 14h1v1h-1z" fill="#808080"/><path d="M7 13h3v2h-3zM8 12h1v1h-1z" fill="#000"/>
<path d="M3 6h1v1h-1zM4 7h1v1h-1z" fill="#fff"/><path d="M6 7h2v1h-2zM8 8h3v1h-3zM11 9h3v1h-3z" fill="#C0D0E0"/>
<path d="M15 14h2v-1h1v1h-1v1h-2z" fill="#A0A8D0"/>
</svg>
<div class="a tb" style="left:20px;top:3px;color:#fff"><svg class="cgb" width="13" height="12"><use href="#g0"/></svg><svg class="cgb" width="13" height="12"><use href="#g1"/></svg>1 - Microsoft Visual Basic [<svg class="cgb" width="13" height="12"><use href="#g2"/></svg><svg class="cgb" width="13" height="12"><use href="#g3"/></svg>]</div>
<div class="a btn" style="left:972px;top:2px;width:16px;height:14px"><div class="a" style="left:3px;top:8px;width:6px;height:2px;background:#000"></div></div>
<div class="a btn" style="left:988px;top:2px;width:16px;height:14px"><div class="a" style="left:5px;top:1px;width:6px;height:6px;border:1px solid #000;border-top-width:2px"></div><div class="a" style="left:2px;top:4px;width:7px;height:7px;border:1px solid #000;border-top-width:2px;background:#D4D0C8"></div></div>
<div class="a btn" style="left:1006px;top:2px;width:16px;height:14px"><svg class="a" style="left:3px;top:2px" width="9" height="8"><path d="M0.5 0.5L8.5 7.5M8.5 0.5L0.5 7.5" stroke="#000" stroke-width="1.6"/></svg></div>
<div class="a" style="left:0;top:18px;width:1024px;height:1px;background:#fff"></div>

<!-- Menu bar -->
<div class="a" style="left:0;top:19px;width:1px;height:21px;background:#fff"></div>
<div class="a" style="left:0;top:40px;width:1024px;height:1px;background:#808080"></div>
<div id="menu" style="font-size:12px;line-height:12px;white-space:nowrap">
<div class="a" style="left:7px;top:24px"><svg class="cg" width="12" height="12"><use href="#g4"/></svg><svg class="cg" width="12" height="12"><use href="#g5"/></svg><span class="mn">(F)</span></div>
<div class="a" style="left:58px;top:24px"><svg class="cg" width="12" height="12"><use href="#g6"/></svg><svg class="cg" width="12" height="12"><use href="#g7"/></svg><span class="mn">(E)</span></div>
<div class="a" style="left:111px;top:24px"><svg class="cg" width="12" height="12"><use href="#g8"/></svg><svg class="cg" width="12" height="12"><use href="#g9"/></svg><span class="mn">(V)</span></div>
<div class="a" style="left:163px;top:24px"><svg class="cg" width="12" height="12"><use href="#g10"/></svg><svg class="cg" width="12" height="12"><use href="#g11"/></svg><span class="mn">(P)</span></div>
<div class="a" style="left:215px;top:24px"><svg class="cg" width="12" height="12"><use href="#g12"/></svg><svg class="cg" width="12" height="12"><use href="#g13"/></svg><span class="mn">(O)</span></div>
<div class="a" style="left:266px;top:24px"><svg class="cg" width="12" height="12"><use href="#g14"/></svg><svg class="cg" width="12" height="12"><use href="#g15"/></svg><span class="mn">(D)</span></div>
<div class="a" style="left:318px;top:24px"><svg class="cg" width="12" height="12"><use href="#g16"/></svg><svg class="cg" width="12" height="12"><use href="#g17"/></svg><span class="mn">(R)</span></div>
<div class="a" style="left:371px;top:24px"><svg class="cg" width="12" height="12"><use href="#g18"/></svg><svg class="cg" width="12" height="12"><use href="#g19"/></svg><span class="mn">(U)</span></div>
<div class="a" style="left:423px;top:24px"><svg class="cg" width="12" height="12"><use href="#g9"/></svg><svg class="cg" width="12" height="12"><use href="#g20"/></svg><span class="mn">(I)</span></div>
<div class="a" style="left:475px;top:24px"><svg class="cg" width="12" height="12"><use href="#g10"/></svg><svg class="cg" width="12" height="12"><use href="#g21"/></svg><span class="mn">(T)</span></div>
<div class="a" style="left:526px;top:24px"><svg class="cg" width="12" height="12"><use href="#g22"/></svg><svg class="cg" width="12" height="12"><use href="#g23"/></svg><svg class="cg" width="12" height="12"><use href="#g11"/></svg><svg class="cg" width="12" height="12"><use href="#g24"/></svg><span class="mn">(A)</span></div>
<div class="a" style="left:602px;top:24px"><svg class="cg" width="12" height="12"><use href="#g25"/></svg><svg class="cg" width="12" height="12"><use href="#g26"/></svg><span class="mn">(W)</span></div>
<div class="a" style="left:654px;top:24px"><svg class="cg" width="12" height="12"><use href="#g27"/></svg><svg class="cg" width="12" height="12"><use href="#g28"/></svg><span class="mn">(H)</span></div>
</div>

<!-- Toolbar -->
<div class="a" style="left:8px;top:41px;width:778px;height:25px;border-top:1px solid #fff;border-left:1px solid #fff;border-right:1px solid #404040"></div>
<div class="a" style="left:12px;top:43px;width:3px;height:21px;border-left:1px solid #fff;border-right:1px solid #808080"></div>
<div class="a" style="left:15px;top:43px;width:3px;height:21px;border-left:1px solid #fff;border-right:1px solid #808080"></div>
<div class="a sep" style="left:112px;top:44px;height:20px"></div>
<div class="a sep" style="left:164px;top:44px;height:20px"></div>
<div class="a sep" style="left:262px;top:44px;height:20px"></div>
<div class="a sep" style="left:314px;top:44px;height:20px"></div>
<div class="a sep" style="left:390px;top:44px;height:20px"></div>
<div class="a sep" style="left:556px;top:44px;height:20px"></div>
<svg class="a" style="left:0;top:0" width="800" height="66" viewBox="0 0 800 66" shape-rendering="crispEdges">
<!-- add project -->
<path d="M22.5 60.5 L27.5 55.5 L37.5 53.5 L37.5 55 L32.5 60.5 Z" fill="#fff" stroke="#000"/>
<path d="M24.5 48.5 L27 49.5 L29 50.5 L31.5 50.5 L31.5 56.5 L24.5 55.5 Z" fill="#D8F0F0" stroke="#000"/>
<path d="M25 51h2v1h-2zM27 52h3v1h-3z" fill="#000"/>
<path d="M31 55 L36 50" stroke="#000" stroke-width="2"/><path d="M36 46h1v1h1v2h-1v1h-1v-1h-1v-2h1z" fill="#000"/><path d="M36 47h1v2h-1z" fill="#fff"/>
<path d="M44 53h6l-3 3z" fill="#000"/>
<!-- add form -->
<path d="M59 47v6M56 50h6M57 48l4 4M61 48l-4 4" stroke="#D0E000" stroke-width="1"/><path d="M59 50h1v1h-1z" fill="#000"/>
<path d="M59.5 51.5 L61 52.5 L68.5 52.5 L68.5 61.5 L63 60.5 L59.5 59.5 Z" fill="#E8F8F8" stroke="#000"/>
<path d="M62 53h6v1h-6z" fill="#000"/><path d="M69 60h2v2h-2z" fill="#A0A0A0"/>
<path d="M78 53h6l-3 3z" fill="#000"/>
<!-- menu editor (disabled) -->
<path d="M93.5 49.5h12v12h-12z" fill="none" stroke="#808080"/><path d="M93 48h13v2h-13z" fill="#808080"/><path d="M91 48h3v1h-3z" fill="#808080"/>
<path d="M96 53h7M96 55h7M96 57h7" stroke="#808080"/><path d="M94 62h13M106 50v12" stroke="#fff"/>
<!-- open -->
<path d="M119.5 50.5h5l1 1h5v8h-11z" fill="#FFFF99" stroke="#000"/>
<path d="M121.5 54.5h14l-4 5h-12z" fill="#808000" stroke="#000"/>
<path d="M127 49 q3 -3 6 0" fill="none" stroke="#000"/><path d="M132 48h3v3z" fill="#000"/>
<!-- save -->
<path d="M143.5 47.5h14v14h-14z" fill="#808000" stroke="#000"/>
<path d="M146 48h9v6h-9z" fill="#C0C0C0"/><path d="M146 56h9v5h-9z" fill="#000"/><path d="M152 57h2v3h-2z" fill="#fff"/>
<!-- cut disabled -->
<path d="M176 47 L179 55 M181 47 L178 55" stroke="#808080"/><circle shape-rendering="geometricPrecision" cx="175.5" cy="58.5" r="2" fill="none" stroke="#808080"/><circle shape-rendering="geometricPrecision" cx="181.5" cy="58.5" r="2" fill="none" stroke="#808080"/>
<!-- copy disabled -->
<path d="M194.5 47.5h7v9h-7zM200.5 51.5h8v9h-8z" fill="#E8E8E8" stroke="#808080"/><path d="M202 54h5M202 56h5M202 58h5M196 50h4M196 52h4" stroke="#808080"/>
<!-- paste -->
<path d="M217.5 48.5h12v11h-12z" fill="#808040" stroke="#000"/><path d="M220.5 47.5h6v3h-6z" fill="#fff" stroke="#000"/>
<path d="M223.5 54.5h9v6h-9z" fill="#fff" stroke="#000"/><path d="M225 57h5" stroke="#000"/>
<!-- find -->
<path d="M242 47h3v4h-3zM249 47h3v4h-3zM241 51h5v9h-5zM248 51h5v9h-5zM245 52h4v5h-4z" fill="#000"/><path d="M243 53h1v3h-1zM250 53h1v3h-1z" fill="#fff"/>
<!-- undo -->
<path d="M272 52 q5 -4 10 0 q1 3 -1 5" fill="none" stroke="#000080" stroke-width="1.5"/><path d="M270 50v6h6z" fill="#000080"/>
<!-- redo disabled -->
<path d="M304 52 q-5 -4 -9 0 q-1 3 1 5" fill="none" stroke="#808080" stroke-width="1.5"/><path d="M306 50v6h-6z" fill="#808080"/>
<!-- run -->
<path d="M331 52v9l6 -4.5z" fill="#000080"/>
<!-- pause -->
<path d="M352 53h2v8h-2zM357 53h2v8h-2z" fill="#808080"/><path d="M354 54h1v8h-1zM359 54h1v8h-1z" fill="#fff"/>
<!-- stop -->
<path d="M373 53h10v9h-10z" fill="#808080"/><path d="M374 62h10M383 54v8" stroke="#fff"/>
<!-- project explorer -->
<path d="M396.5 56.5l4 -2h5l3 5 -4 2z" fill="#fff" stroke="#000"/>
<path d="M397 46h3v1h-2v5h-1zM398 48h3v3h-3zM400 51h3v3h-3zM402 53h3v3h-3z" fill="#000"/><path d="M399 49h1v1h-1zM401 52h1v1h-1zM403 54h1v1h-1z" fill="#90D0C0"/>
<path d="M409 46h1v1h1v1h-1v1h-1v-1h-1v-1h1zM408 50h2v1h1v2h-1v1h-2v-1h-1v-2h1zM408 55h2v1h1v2h-1v1h-2v-1h-1v-2h1zM409 59h1v1h1v1h-1v1h-1v-1h-1v-1h1z" fill="#000"/><path d="M408 51h2v2h-2zM408 56h2v2h-2z" fill="#fff"/>
<!-- properties -->
<path d="M419 50h13v11h-13z" fill="#000"/><path d="M421 52h9v8h-9z" fill="#fff"/>
<path d="M421 56h2v1h-2zM424 56h5v1h-5zM421 58h2v1h-2zM424 58h5v1h-5z" fill="#000"/>
<path d="M422 53l4 -5 4 5z" fill="#808080"/><path d="M423 52h1v1h-1zM425 50h1v1h-1zM427 50h1v1h-1zM425 52h1v1h-1zM427 52h1v1h-1zM429 52h1v1h-1zM426 49h1v1h-1zM426 51h1v1h-1zM428 51h1v1h-1zM424 51h1v1h-1z" fill="#fff"/>
<path d="M426 47h6v1h-6z" fill="#000"/><path d="M432 47h1v7h-1zM433 48h2v5h-2z" fill="#000080"/>
<!-- form layout -->
<path d="M446 47h9v6h-9z" fill="#000"/><path d="M446 47h9v1h-9z" fill="#808080"/><path d="M447 49h7v4h-7z" fill="#fff"/>
<path d="M443 51h8v7h-8z" fill="#000"/><path d="M443 51h8v1h-8z" fill="#808080"/><path d="M444 53h6v4h-6z" fill="#fff"/>
<path d="M447 54h10v8h-10z" fill="#000"/><path d="M448 54h8v2h-8z" fill="#000080"/><path d="M448 56h8v5h-8z" fill="#fff"/>
<!-- object browser -->
<path d="M466 46h3v1h1v3h-1v1h-3v-1h-1v-3h1z" fill="#000080"/>
<path d="M477 46h4v4h-4z" fill="#202020"/>
<path d="M472 48h3v3h-3z" fill="#000"/><path d="M473 49h1v1h-1z" fill="#fff"/><path d="M470 50h2v1h-2z" fill="#000"/>
<path d="M469 51h1v1h1v1h1v1h-1v1h-1v-1h-1v-1h-1v-1h1z" fill="#000"/>
<path d="M470 54h8v1h-8zM469 55h9v6h-9z" fill="#000"/><path d="M470 56h7v4h-7z" fill="#FFFF80"/><path d="M478 53h1v7h-1z" fill="#000"/><path d="M477 54h1v1h-1z" fill="#C0C0C0"/>
<!-- toolbox hammer -->
<path d="M489 59l9 -9 1 1 -9 9z" fill="#000"/><path d="M495 47h5l3 3 -1 2 -2 -1 -3 1 -2 -2z" fill="#808060" stroke="#000" stroke-width="0.8"/>
<path d="M490 49l11 10 -1 1 -11 -10z" fill="#000"/><path d="M488 48h2v-1h2v3h-1v1h-3z" fill="#000"/><path d="M489 48h1v1h-1z" fill="#fff"/>
<!-- data view -->
<path d="M512 46h13v1h1v11h-3v-1h-10v-1h-1z" fill="#000"/><path d="M513 47h12v2h-12zM513 51h12v5h-12z" fill="#FFFF00"/><path d="M513 50h12v1h-12z" fill="#000"/>
<path d="M520 54h4v1h1v3h-1v1h-4v-1h-1v-3h1z" fill="#000"/><path d="M521 55h2v3h-2z" fill="#C0C0C0"/><path d="M524 59h1v1h1v1h1v1h-1v-1h-1v-1h-1z" fill="#000"/>
<!-- component manager -->
<path d="M538 46h1v15h-1z" fill="#808080"/><path d="M539 47h2l8 3v11h-10z" fill="#fff"/><path d="M549 50h1v11h-9v-1h8z" fill="#000"/><path d="M540 47h2l7 3h-1z" fill="#A040A0"/>
<circle shape-rendering="geometricPrecision" cx="544" cy="52" r="2.6" fill="#C01050"/><path d="M544 54v3M539 58.5h3" stroke="#000" stroke-width="1"/>
<circle shape-rendering="geometricPrecision" cx="536.5" cy="58.5" r="2.6" fill="#10A020"/><circle shape-rendering="geometricPrecision" cx="544.5" cy="58.5" r="2.6" fill="#30A0E0"/>
</svg>

<div class="a tr" style="left:564px;top:48px"><svg class="cg" width="12" height="12"><use href="#g17"/></svg> 19, <svg class="cg" width="12" height="12"><use href="#g29"/></svg> 1</div>
<div class="a" style="left:0;top:66px;width:786px;height:1px;background:#808080"></div>
<div class="a" style="left:786px;top:66px;width:238px;height:1px;background:#fff"></div>
<div class="a" style="left:1022px;top:19px;width:1px;height:22px;background:#808080"></div>

<!-- Left toolbox -->
<div class="a gbar" style="left:0;top:67px;width:61px;height:16px"></div>
<div class="a btn" style="left:47px;top:68px;width:13px;height:13px"><svg class="a" style="left:2px;top:2px" width="8" height="7"><path d="M0.5 0.5L7.5 6.5M7.5 0.5L0.5 6.5" stroke="#000" stroke-width="1.5"/></svg></div>
<div class="a" style="left:66px;top:67px;width:1px;height:655px;background:#EAE8E4"></div>
<div class="a" style="left:67px;top:67px;width:1px;height:655px;background:#808080"></div>
<div class="a btn" style="left:1px;top:84px;width:60px;height:20px"></div>
<div class="a m" style="left:8px;top:88px;font-size:11px;line-height:12px;letter-spacing:-0.6px">General</div>
<div class="a chk" style="left:1px;top:105px;width:28px;height:28px;border-top:1px solid #808080;border-left:1px solid #808080;border-right:1px solid #fff;border-bottom:1px solid #fff"></div>
<svg class="a" style="left:0;top:100px" width="62" height="312" viewBox="0 100 62 312">
<!-- pointer -->
<path d="M12 112v12l3-3 3 5 2-1-3-5h4z" fill="#000"/>
<!-- picturebox -->
<rect x="33" y="111" width="20" height="16" fill="#202020"/><rect x="35" y="113" width="16" height="12" fill="#60C0E0"/><path d="M35 121h16v4h-16z" fill="#C0C000"/><path d="M38 114v9M40 116v7" stroke="#00A000" stroke-width="2"/><circle cx="47" cy="116" r="2" fill="none" stroke="#000"/>
<!-- label A -->
<text x="5" y="153" font-family="Liberation Serif" font-weight="bold" font-size="21" fill="#000">A</text>
<!-- textbox -->
<rect x="32.5" y="138.5" width="19" height="15" fill="#fff" stroke="#000"/><path d="M33 139h18" stroke="#808080"/><text x="34" y="151" font-family="Liberation Sans" font-size="11" fill="#000">ab</text><path d="M48.5 141v11" stroke="#000"/>
<!-- frame -->
<path d="M5.5 166.5h2M14.5 166.5h8.5v16h-17.5v-16" fill="none" stroke="#808080"/><path d="M6.5 183.5h17v-17" fill="none" stroke="#fff"/>
<text x="7" y="170" font-family="Liberation Mono" font-size="7" fill="#000">xv</text>
<!-- command -->
<rect x="34" y="169" width="17" height="12" fill="#D4D0C8"/><path d="M34.5 181v-11.5h16" fill="none" stroke="#fff"/><path d="M34 180.5h17.5v-11" fill="none" stroke="#000"/><path d="M35 179.5h15v-9" fill="none" stroke="#808080"/>
<!-- checkbox -->
<rect x="8.5" y="196.5" width="11" height="11" fill="#fff" stroke="#000"/><path d="M10.5 201.5l2.5 3 4-6" fill="none" stroke="#000" stroke-width="1.8"/>
<!-- option -->
<circle cx="42.5" cy="202.5" r="5" fill="#fff" stroke="#808080"/><circle cx="42.5" cy="202.5" r="2" fill="#000"/>
<!-- combo -->
<rect x="5.5" y="222.5" width="18" height="16" fill="#fff" stroke="#000"/><path d="M7 227h9M7 230h9M7 233h9M7 236h9" stroke="#000"/><rect x="17" y="223" width="6" height="15" fill="#D4D0C8"/><path d="M18 225h5l-2.5 2z" fill="#000"/><path d="M18 230h5l-2.5-2z M18 233h5l-2.5 2z" fill="#000"/><path d="M17 222.5h7" stroke="#000" stroke-width="2"/>
<!-- listbox -->
<rect x="33.5" y="225.5" width="18" height="12" fill="#fff" stroke="#000"/><path d="M35 228h9M35 231h9M35 234h9" stroke="#000"/><rect x="45" y="226" width="6" height="11" fill="#D4D0C8"/><path d="M46 230h4l-2-2z M46 233h4l-2 2z" fill="#000"/>
<!-- hscroll -->
<rect x="4" y="254" width="9" height="9" fill="#D4D0C8" stroke="#000" stroke-width="0.8"/><path d="M10 255.5v6l-3-3z" fill="#000"/><rect x="16" y="254" width="9" height="9" fill="#D4D0C8" stroke="#000" stroke-width="0.8"/><path d="M19 255.5v6l3-3z" fill="#000"/><path d="M13 254v9" stroke="#fff"/>
<!-- vscroll -->
<rect x="38" y="248" width="9" height="9" fill="#D4D0C8" stroke="#000" stroke-width="0.8"/><path d="M39.5 254h6l-3-3z" fill="#000"/><rect x="38" y="260" width="9" height="9" fill="#D4D0C8" stroke="#000" stroke-width="0.8"/><path d="M39.5 263h6l-3 3z" fill="#000"/>
<!-- timer -->
<circle cx="14.5" cy="288.5" r="7.5" fill="#fff" stroke="#000" stroke-width="2"/><path d="M12 276h5v1h-5zM14 277h1v3h-1z" fill="#000"/><path d="M14.5 288.5l3 -3" stroke="#000"/><path d="M9 288h1M19 288h1M14 283h1M14 293h1" stroke="#808080"/>
<!-- drive -->
<path d="M34 281h17v11h-17z" fill="#000"/><path d="M35 282h15v9h-15z" fill="#E8E8E8"/><path d="M35 282h15v1h-15z" fill="#fff"/><path d="M36 286h12v1h-12z" fill="#808080"/><path d="M46 284h3v1h-3z" fill="#404040"/>
<!-- dir folder -->
<path d="M6.5 309.5h5l1 2h10v10h-16z" fill="#FFFF80" stroke="#000"/>
<!-- file -->
<path d="M36.5 307.5h9l4 4v10h-13z" fill="#fff" stroke="#000"/><path d="M38 310h5v1h-5zM38 313h9v1h-9zM38 315h9v1h-9zM38 317h9v1h-9zM38 319h7v1h-7z" fill="#000"/>
<!-- shape -->
<rect x="13" y="336" width="8" height="9" fill="#90E0F0" stroke="#000" stroke-width="0.8"/><rect x="7" y="340" width="7" height="7" fill="#E06080" stroke="#000" stroke-width="0.8"/><circle cx="13.5" cy="346" r="3.5" fill="#F0F080" stroke="#000" stroke-width="0.8"/>
<!-- line -->
<path d="M35 339l14 7" stroke="#000" stroke-width="1.2"/>
<!-- image -->
<rect x="5.5" y="362.5" width="18" height="17" fill="#fff" stroke="#000" stroke-width="1.5"/><rect x="7" y="364" width="15" height="14" fill="#90E0F0"/><path d="M7 378l5-6 3 3 2-2 5 5z" fill="#00A040"/><circle cx="18" cy="367" r="1.5" fill="none" stroke="#000" stroke-width="0.8"/>
<!-- data -->
<rect x="32.5" y="360.5" width="9" height="9" fill="#D4D0C8" stroke="#000"/><rect x="43.5" y="360.5" width="9" height="9" fill="#D4D0C8" stroke="#000"/><path d="M35 362v6M39 362v6l-3-3z" fill="#000" stroke="#000" stroke-width="0.8"/><path d="M50 362v6M46 362v6l3-3z" fill="#000" stroke="#000" stroke-width="0.8"/>
<path d="M36.5 370v7h2M36.5 374h2" fill="none" stroke="#000"/><rect x="38.5" y="372.5" width="14" height="3" fill="#fff" stroke="#000"/><rect x="38.5" y="377.5" width="14" height="3" fill="#fff" stroke="#000"/>
<!-- ole -->
<path d="M5 389h1v1h-1zM7 389h1v1h-1zM9 389h1v1h-1zM11 389h1v1h-1zM13 389h1v1h-1zM15 389h1v1h-1zM17 389h1v1h-1zM5 391h1v1h-1zM7 391h1v1h-1zM9 391h1v1h-1zM11 391h1v1h-1zM13 391h1v1h-1zM15 391h1v1h-1zM17 391h1v1h-1zM5 393h1v1h-1zM7 393h1v1h-1zM9 393h1v1h-1zM11 393h1v1h-1zM13 393h1v1h-1zM15 393h1v1h-1zM17 393h1v1h-1zM5 395h1v1h-1zM7 395h1v1h-1zM9 395h1v1h-1zM11 395h1v1h-1zM13 395h1v1h-1zM15 395h1v1h-1zM17 395h1v1h-1zM5 397h1v1h-1zM7 397h1v1h-1zM5 399h1v1h-1zM7 399h1v1h-1zM5 401h1v1h-1zM7 401h1v1h-1zM5 403h1v1h-1zM7 403h1v1h-1z" fill="#000"/>
<rect x="9" y="397" width="15" height="11" fill="#000"/><path d="M11 399h3v6h-3zM15 399h1v6h2v1h-3zM19 399h4v1h-3v2h2v1h-2v2h3v1h-4z" fill="#fff" shape-rendering="crispEdges"/><path d="M12 400h1v4h-1z" fill="#000"/>
</svg>
<!-- MDI -->
<div class="a" style="left:68px;top:67px;width:586px;height:655px;background:#808080;border-top:1px solid #404040;border-left:1px solid #404040;overflow:hidden">
 <!-- form window (inactive) : page coords offset -69,-68 -->
 <div class="a" style="left:22px;top:23px;width:555px;height:455px;background:#D4D0C8;border-top:1px solid #D4D0C8;border-left:1px solid #D4D0C8;border-right:1px solid #404040;border-bottom:1px solid #404040;box-shadow:inset 1px 1px 0 #fff, inset -1px -1px 0 #808080"></div>
 <div class="a ibar" style="left:26px;top:27px;width:545px;height:18px"></div>
 <svg class="a" style="left:29px;top:30px" width="13" height="12"><path d="M1.5 1.5h4l1 1h4v8h-9z" fill="#fff" stroke="#000"/><path d="M2 3.5h9" stroke="#000"/><path d="M3.5 2.5h8v9h-9" fill="none" stroke="#000"/></svg>
 <div class="a tb" style="left:47px;top:30px;color:#D4D0C8"><svg class="cgb" width="13" height="12"><use href="#g0"/></svg><svg class="cgb" width="13" height="12"><use href="#g1"/></svg>1 - Form1 (Form)</div>
 <div class="a btn" style="left:521px;top:29px;width:16px;height:14px"><div class="a" style="left:3px;top:8px;width:6px;height:2px;background:#000"></div></div>
 <div class="a btn" style="left:537px;top:29px;width:16px;height:14px"><div class="a" style="left:2px;top:1px;width:9px;height:9px;border:1px solid #000;border-top-width:2px"></div></div>
 <div class="a btn" style="left:555px;top:29px;width:16px;height:14px"><svg class="a" style="left:3px;top:2px" width="9" height="8"><path d="M0.5 0.5L8.5 7.5M8.5 0.5L0.5 7.5" stroke="#000" stroke-width="1.6"/></svg></div>
 <div class="a" style="left:26px;top:45px;width:546px;height:429px;background:#fff"></div>
 <!-- design surface -->
 <div class="a" style="left:33px;top:53px;width:40px;height:391px;border-top:1px solid #B8B4AC;border-left:1px solid #B8B4AC;box-shadow:inset 1px 1px 0 #E4E0DA;background:#D4D0C8"></div>
 <div class="a" style="left:37px;top:57px;width:40px;height:18px;background:#808080"></div>
 <div class="a" style="left:41px;top:60px;width:10px;height:10px;border-radius:5px;background:#fff"></div>
 <svg class="a" style="left:36px;top:75px" width="8" height="362"><defs><pattern id="dots" width="8" height="8" patternUnits="userSpaceOnUse"><rect x="1" y="1" width="1" height="1" fill="#000"/></pattern></defs><rect width="8" height="362" fill="url(#dots)"/></svg>
 <div class="a" style="left:33px;top:444px;width:12px;height:1px;background:#404040"></div>

 <!-- code window (active) -->
 <div class="a" style="left:43px;top:45px;width:560px;height:454px;background:#D4D0C8;border-top:1px solid #D4D0C8;border-left:1px solid #D4D0C8;border-right:1px solid #404040;border-bottom:1px solid #404040;box-shadow:inset 1px 1px 0 #fff, inset -1px -1px 0 #808080"></div>
 <div class="a tbar" style="left:47px;top:49px;width:552px;height:18px"></div>
 <svg class="a" style="left:50px;top:50px" width="14" height="14"><rect x="1.5" y="1.5" width="11" height="9" fill="#fff" stroke="#000"/><rect x="2" y="2" width="10" height="2" fill="#000080"/><path d="M2 13l4-5" stroke="#800080" stroke-width="2"/><path d="M1 12l2 1" stroke="#00a0a0"/></svg>
 <div class="a tb" style="left:67px;top:52px;color:#fff"><svg class="cgb" width="13" height="12"><use href="#g0"/></svg><svg class="cgb" width="13" height="12"><use href="#g1"/></svg>1 - Form1 (Code)</div>
 <div class="a btn" style="left:543px;top:51px;width:16px;height:14px"><div class="a" style="left:3px;top:8px;width:6px;height:2px;background:#000"></div></div>
 <div class="a btn" style="left:559px;top:51px;width:16px;height:14px"><div class="a" style="left:2px;top:1px;width:9px;height:9px;border:1px solid #000;border-top-width:2px"></div></div>
 <div class="a btn" style="left:577px;top:51px;width:16px;height:14px"><svg class="a" style="left:3px;top:2px" width="9" height="8"><path d="M0.5 0.5L8.5 7.5M8.5 0.5L0.5 7.5" stroke="#000" stroke-width="1.6"/></svg></div>
 <!-- combos -->
 <div class="a sunk" style="left:57px;top:70px;width:258px;height:20px;background:#fff"></div>
 <div class="a m" style="left:61px;top:74px;font-size:11px;line-height:12px;font-weight:bold;letter-spacing:0.4px">Command2</div>
 <div class="a btn" style="left:298px;top:71px;width:16px;height:17px"><svg class="a" style="left:3px;top:5px" width="9" height="5"><path d="M0 0h9l-4.5 5z" fill="#000"/></svg></div>
 <div class="a sunk" style="left:326px;top:70px;width:258px;height:20px;background:#fff"></div>
 <div class="a m" style="left:330px;top:74px;font-size:11px;line-height:12px;font-weight:bold;letter-spacing:0.4px">Click</div>
 <div class="a btn" style="left:567px;top:71px;width:16px;height:17px"><svg class="a" style="left:3px;top:5px" width="9" height="5"><path d="M0 0h9l-4.5 5z" fill="#000"/></svg></div>
 <!-- code area -->
 <div class="a" style="left:47px;top:92px;width:552px;height:402px;border-top:1px solid #808080;border-left:1px solid #808080;box-shadow:inset 1px 1px 0 #404040;background:#fff"></div>
 <div class="a" style="left:49px;top:94px;width:20px;height:384px;background:#D4D0C8;border-right:1px solid #000"></div>
 <div class="a" style="left:70px;top:251px;width:507px;height:1px;background:#808080"></div>
 <div class="a code" style="left:80px;top:98px"><span class="kw">Private Sub</span> Command1_Click()
<span class="kw">Dim</span> a, b, c, d, e, f, g <span class="kw">As Double</span>
a = Val(Text1.Text)
b = Val(Text2.Text)
c = Val(Text3.Text)
d = Val(Text4.Text)
e = Val(Text5.Text)
g = a + b + c + d + e
f = g / 5
Label9.Caption = f
Label8.Caption = g

<span class="kw">End Sub</span>

<span class="kw">Private Sub</span> Command2_Click()
<span class="kw">Dim</span> msgRes <span class="kw">As</span> VbMsgBoxResult
msgRes = MsgBox(“<span class="cj"><svg class="cg" width="12" height="12"><use href="#g30"/></svg></span><span class="cj"><svg class="cg" width="12" height="12"><use href="#g31"/></svg></span><span class="cj"><svg class="cg" width="12" height="12"><use href="#g32"/></svg></span><span class="cj"><svg class="cg" width="12" height="12"><use href="#g33"/></svg></span>?”, vbQuestion + vbYesNo + vbDefaultButton1, “<span class="cj"><svg class="cg" width="12" height="12"><use href="#g32"/></svg></span><span class="cj"><svg class="cg" width="12" height="12"><use href="#g33"/></svg></span>”)
<span class="kw">If</span> msgRes = vbYes <span class="kw">Then Unload Me</span>

<span class="kw">End Sub</span></div>
 <!-- vscroll -->
 <div class="a chk" style="left:577px;top:94px;width:16px;height:384px"></div>
 <div class="a" style="left:577px;top:94px;width:16px;height:6px;background:#D4D0C8;border-top:1px solid #fff;border-left:1px solid #fff"></div>
 <div class="a" style="left:577px;top:100px;width:16px;height:1px;background:#000"></div>
 <div class="a btn" style="left:577px;top:101px;width:16px;height:15px"><svg class="a" style="left:4px;top:4px" width="7" height="4"><path d="M0 4h7l-3.5-4z" fill="#000"/></svg></div>
 <div class="a btn" style="left:577px;top:116px;width:16px;height:346px"></div>
 <div class="a btn" style="left:577px;top:462px;width:16px;height:16px"><svg class="a" style="left:4px;top:5px" width="7" height="4"><path d="M0 0h7l-3.5 4z" fill="#000"/></svg></div>
 <!-- hscroll -->
 <div class="a chk" style="left:49px;top:478px;width:528px;height:16px"></div>
 <div class="a btn" style="left:49px;top:478px;width:16px;height:16px"><svg class="a" style="left:2px;top:3px" width="11" height="9"><path d="M2 1h8v1h-8zM5 3h5v1h-5zM2 5h8v1h-8z" fill="#000"/></svg></div>
 <div class="a chk" style="left:65px;top:478px;width:16px;height:16px;border-top:1px solid #404040;border-left:1px solid #404040;border-right:1px solid #fff;border-bottom:1px solid #fff;box-shadow:inset 1px 1px 0 #808080"><svg class="a" style="left:2px;top:2px" width="12" height="12"><path d="M2 1h9v1h-9zM5 3h6v1h-6zM2 5h9v1h-9zM5 7h6v1h-6zM2 9h9v1h-9z" fill="#000"/></svg></div>
 <div class="a btn" style="left:81px;top:478px;width:16px;height:16px"><svg class="a" style="left:5px;top:3px" width="5" height="8"><path d="M5 0v8l-4-4z" fill="#000"/></svg></div>
 <div class="a btn" style="left:97px;top:478px;width:37px;height:16px"></div>
 <div class="a btn" style="left:562px;top:478px;width:16px;height:16px"><svg class="a" style="left:5px;top:3px" width="5" height="8"><path d="M0 0v8l4-4z" fill="#000"/></svg></div>
 <div class="a" style="left:578px;top:478px;width:16px;height:16px;background:#D4D0C8"></div>
</div>

<!-- Right panels -->
<div class="a" style="left:653px;top:67px;width:1px;height:656px;background:#fff"></div>
<!-- project explorer -->
<div class="a gbar" style="left:661px;top:67px;width:362px;height:15px"></div>
<div class="a tb" style="left:663px;top:68px;color:#D4D0C8"><svg class="cgb" width="13" height="12"><use href="#g0"/></svg><svg class="cgb" width="13" height="12"><use href="#g1"/></svg> - <svg class="cgb" width="13" height="12"><use href="#g0"/></svg><svg class="cgb" width="13" height="12"><use href="#g1"/></svg>1</div>
<div class="a btn" style="left:1010px;top:68px;width:13px;height:13px"><svg class="a" style="left:2px;top:2px" width="8" height="7"><path d="M0.5 0.5L7.5 6.5M7.5 0.5L0.5 6.5" stroke="#000" stroke-width="1.5"/></svg></div>
<div class="a" style="left:661px;top:83px;width:362px;height:26px;border-top:1px solid #fff;border-left:1px solid #fff;border-bottom:1px solid #808080"></div>
<svg class="a" style="left:660px;top:82px" width="90" height="28" viewBox="660 82 90 28" shape-rendering="crispEdges">
<path d="M667.5 90.5h13v11h-13z" fill="#fff" stroke="#000"/><path d="M668 90h13v2h-13z" fill="#000080"/><path d="M668 92h1v9h-1z" fill="#808080"/><path d="M671 94h3v1h-3zM675 94h2v1h-2zM671 96h2v1h-2zM674 96h2v1h-2zM671 98h2v1h-2zM674 98h3v1h-3zM671 100h5v1h-5z" fill="#000"/>
<path d="M689.5 89.5h14v12h-14z" fill="#C0C0C0" stroke="#000"/><path d="M690 89h14v2h-14z" fill="#000080"/><path d="M691 93h3v1h-3zM691 97h3v1h-3z" fill="#000"/><path d="M696.5 92.5h5v3h-5zM696.5 96.5h5v3h-5z" fill="#fff" stroke="#000"/>
<path d="M711 86h1v22h-1z" fill="#808080"/><path d="M712 86h1v22h-1z" fill="#fff"/>
</svg>
<div class="a chk" style="left:715px;top:85px;width:23px;height:23px;border-top:1px solid #808080;border-left:1px solid #808080;border-right:1px solid #fff;border-bottom:1px solid #fff"></div>
<svg class="a" style="left:715px;top:85px" width="23" height="23" viewBox="715 85 23 23" shape-rendering="crispEdges"><path d="M719.5 91.5v-1h5v1h8.5v10h-13.5z" fill="#C0C0C0" stroke="#000"/><path d="M720 92h12" stroke="#fff"/></svg>
<!-- tree -->
<div class="a" style="left:662px;top:110px;width:361px;height:213px;background:#fff;border-top:1px solid #808080;border-left:1px solid #808080;border-right:1px solid #fff;border-bottom:1px solid #fff;box-shadow:inset 1px 1px 0 #404040, inset -1px -1px 0 #D4D0C8"></div>
<svg class="a" style="left:660px;top:110px" width="200" height="60" viewBox="660 110 200 60" shape-rendering="crispEdges">
<path d="M667.5 117.5h8v8h-8z" fill="#fff" stroke="#808080"/><path d="M669 121h5v1h-5z" fill="#000"/>
<path d="M677 121h1M679 121h1M681 121h1M690 129v1M690 131v1M690 133v1M690 135v1" stroke="#808080"/>
<path d="M686.5 132.5h8v8h-8z" fill="#fff" stroke="#808080"/><path d="M688 136h5v1h-5z" fill="#000"/>
<path d="M696 136h1M698 136h1M700 136h1M709 143v1M709 145v1M709 147v1M709 149v1M709 151v1M709 153h1M711 153h1M713 153h1M715 153h1M717 153h1M719 153h1" stroke="#808080"/>
<!-- project icon -->
<path d="M682.5 127.5l5 -5h11l-5 5z" fill="#fff" stroke="#000"/>
<path d="M684.5 116.5h8v8h-8z" fill="#D8F0F0" stroke="#000"/><path d="M685 118h7M685 120h6" stroke="#000"/>
<path d="M697 113l-4 8" stroke="#000" stroke-width="2"/><path d="M695.5 112.5h2v2h-2z" fill="#fff" stroke="#000"/>
<!-- folder -->
<path d="M702.5 132.5h5l1 1h7v8h-13z" fill="#FFFF99" stroke="#000"/><path d="M703.5 135.5h12l-2 6h-10z" fill="#C8C060" stroke="#000"/>
<!-- form icon -->
<path d="M722.5 146.5h4l1 1h5v9h-10z" fill="#fff" stroke="#000"/><path d="M723 148h9" stroke="#000"/><path d="M724.5 147.5h9v10h-9" fill="none" stroke="#000"/><path d="M734 157l2 -1" stroke="#808080"/>
</svg>
<div class="a tb" style="left:703px;top:115px"><svg class="cgb" width="13" height="12"><use href="#g0"/></svg><svg class="cgb" width="13" height="12"><use href="#g1"/></svg>1 (<svg class="cgb" width="13" height="12"><use href="#g0"/></svg><svg class="cgb" width="13" height="12"><use href="#g1"/></svg>1.vbp)</div>
<div class="a" style="left:722px;top:131px;font-size:12px;line-height:13px;white-space:pre"><svg class="cg" width="12" height="12"><use href="#g25"/></svg><svg class="cg" width="12" height="12"><use href="#g34"/></svg></div>
<div class="a" style="left:739px;top:145px;width:107px;height:16px;background:#D4D0C8"></div>
<div class="a pg" style="left:741px;top:148px">Form1 (Form1.frm)</div>

<!-- properties -->
<div class="a gbar" style="left:661px;top:328px;width:362px;height:15px"></div>
<div class="a tb" style="left:663px;top:329px;color:#D4D0C8"><svg class="cgb" width="13" height="12"><use href="#g35"/></svg><svg class="cgb" width="13" height="12"><use href="#g36"/></svg> - Command2</div>
<div class="a btn" style="left:1010px;top:329px;width:13px;height:13px"><svg class="a" style="left:2px;top:2px" width="8" height="7"><path d="M0.5 0.5L7.5 6.5M7.5 0.5L0.5 6.5" stroke="#000" stroke-width="1.5"/></svg></div>
<div class="a sunk" style="left:662px;top:347px;width:360px;height:18px;background:#fff"></div>
<div class="a m" style="left:665px;top:350px;font-size:11px;line-height:12px;font-weight:bold;letter-spacing:0.4px">Command2</div>
<div class="a pg" style="left:726px;top:350px">CommandButton</div>
<div class="a btn" style="left:1004px;top:349px;width:16px;height:14px"><svg class="a" style="left:5px;top:5px" width="5" height="3"><path d="M0 0h5l-2.5 3z" fill="#000"/></svg></div>
<!-- tabs -->
<div class="a" style="left:661px;top:387px;width:362px;height:175px;border-top:1px solid #fff;border-left:1px solid #fff;border-right:1px solid #404040;border-bottom:1px solid #404040;box-shadow:inset -1px -1px 0 #808080"></div>
<div class="a" style="left:724px;top:370px;width:59px;height:17px;border-top:1px solid #fff;border-right:1px solid #404040;box-shadow:inset -1px 0 0 #808080"></div>
<div class="a" style="left:728px;top:373px;font-size:12px;line-height:13px;white-space:pre"><svg class="cg" width="12" height="12"><use href="#g37"/></svg><svg class="cg" width="12" height="12"><use href="#g38"/></svg><svg class="cg" width="12" height="12"><use href="#g39"/></svg><svg class="cg" width="12" height="12"><use href="#g24"/></svg></div>
<div class="a" style="left:662px;top:367px;width:62px;height:21px;background:#D4D0C8;border-top:1px solid #fff;border-left:1px solid #fff;border-right:1px solid #404040;box-shadow:inset -1px 0 0 #808080"></div>
<div class="a" style="left:669px;top:371px;font-size:12px;line-height:13px;white-space:pre"><svg class="cg" width="12" height="12"><use href="#g37"/></svg><svg class="cg" width="12" height="12"><use href="#g40"/></svg><svg class="cg" width="12" height="12"><use href="#g41"/></svg><svg class="cg" width="12" height="12"><use href="#g24"/></svg></div>
<!-- grid -->
<div class="a" style="left:665px;top:389px;width:354px;height:168px;background:#fff;border-top:1px solid #808080;border-left:1px solid #808080;border-right:1px solid #fff;border-bottom:1px solid #fff;box-shadow:inset 1px 1px 0 #404040, inset -1px -1px 0 #D4D0C8"></div>
<div class="a" style="left:767px;top:391px;width:1px;height:165px;background:#C0C0C0"></div>
<div class="a" style="left:668px;top:392px;font-size:12px;line-height:13px;white-space:pre;color:#000"><span class="pm">(</span><svg class="cg" width="12" height="12"><use href="#g42"/></svg><svg class="cg" width="12" height="12"><use href="#g43"/></svg><span class="pm">)</span></div>
<div class="a pg" style="left:769px;top:393px">Command2</div>
<div class="a" style="left:667px;top:405px;width:334px;height:1px;background:#C0C0C0"></div>
<div class="a pg" style="left:669px;top:408px;color:#000">Appearance</div>
<div class="a pg" style="left:769px;top:408px">1 - 3D</div>
<div class="a" style="left:667px;top:420px;width:334px;height:1px;background:#C0C0C0"></div>
<div class="a pg" style="left:669px;top:423px;color:#000">BackColor</div>
<div class="a" style="left:769px;top:422px;width:11px;height:11px;background:#D4D0C8;border:1px solid #000"></div>
<div class="a pg" style="left:784px;top:423px">&amp;H8000000F&amp;</div>
<div class="a" style="left:667px;top:435px;width:334px;height:1px;background:#C0C0C0"></div>
<div class="a pg" style="left:669px;top:438px;color:#000">Cancel</div>
<div class="a pg" style="left:769px;top:438px">False</div>
<div class="a" style="left:667px;top:450px;width:334px;height:1px;background:#C0C0C0"></div>
<div class="a" style="left:667px;top:451px;width:100px;height:14px;background:#0A246A"></div>
<div class="a pg" style="left:669px;top:453px;color:#fff">Caption</div>
<div class="a" style="left:769px;top:452px;font-size:12px;line-height:13px;white-space:pre"><svg class="cg" width="12" height="12"><use href="#g32"/></svg><svg class="cg" width="12" height="12"><use href="#g33"/></svg></div>
<div class="a" style="left:667px;top:465px;width:334px;height:1px;background:#C0C0C0"></div>
<div class="a pg" style="left:669px;top:468px;color:#000">CausesValidation</div>
<div class="a pg" style="left:769px;top:468px">True</div>
<div class="a" style="left:667px;top:480px;width:334px;height:1px;background:#C0C0C0"></div>
<div class="a pg" style="left:669px;top:483px;color:#000">Default</div>
<div class="a pg" style="left:769px;top:483px">False</div>
<div class="a" style="left:667px;top:495px;width:334px;height:1px;background:#C0C0C0"></div>
<div class="a pg" style="left:669px;top:498px;color:#000">DisabledPicture</div>
<div class="a pg" style="left:771px;top:498px">(None)</div>
<div class="a" style="left:667px;top:510px;width:334px;height:1px;background:#C0C0C0"></div>
<div class="a pg" style="left:669px;top:513px;color:#000">DownPicture</div>
<div class="a pg" style="left:771px;top:513px">(None)</div>
<div class="a" style="left:667px;top:525px;width:334px;height:1px;background:#C0C0C0"></div>
<div class="a pg" style="left:669px;top:528px;color:#000">DragIcon</div>
<div class="a pg" style="left:771px;top:528px">(None)</div>
<div class="a" style="left:667px;top:540px;width:334px;height:1px;background:#C0C0C0"></div>
<div class="a pg" style="left:669px;top:543px;color:#000">DragMode</div>
<div class="a pg" style="left:769px;top:543px">0 - Manual</div>
<div class="a chk" style="left:1001px;top:391px;width:16px;height:165px"></div>
<div class="a btn" style="left:1001px;top:391px;width:16px;height:15px"><svg class="a" style="left:4px;top:5px" width="7" height="4"><path d="M0 4h7l-3.5-4z" fill="#000"/></svg></div>
<div class="a btn" style="left:1001px;top:406px;width:16px;height:44px"></div>
<div class="a btn" style="left:1001px;top:541px;width:16px;height:15px"><svg class="a" style="left:4px;top:5px" width="7" height="4"><path d="M0 0h7l-3.5 4z" fill="#000"/></svg></div>
<!-- description -->
<div class="a sunk" style="left:661px;top:566px;width:362px;height:44px;background:#D4D0C8;box-shadow:none"></div>
<div class="a m" style="left:663px;top:569px;font-size:11px;line-height:12px;font-weight:bold;letter-spacing:0.4px">Caption</div>
<div class="a" style="left:663px;top:582px;font-size:12px;line-height:13px;white-space:pre"><svg class="cg" width="12" height="12"><use href="#g44"/></svg><svg class="cg" width="12" height="12"><use href="#g45"/></svg><span style="display:inline-block;width:6px;text-align:center">/</span><svg class="cg" width="12" height="12"><use href="#g46"/></svg><svg class="cg" width="12" height="12"><use href="#g47"/></svg><svg class="cg" width="12" height="12"><use href="#g48"/></svg><svg class="cg" width="12" height="12"><use href="#g49"/></svg><svg class="cg" width="12" height="12"><use href="#g50"/></svg><svg class="cg" width="12" height="12"><use href="#g51"/></svg><svg class="cg" width="12" height="12"><use href="#g52"/></svg><svg class="cg" width="12" height="12"><use href="#g53"/></svg><svg class="cg" width="12" height="12"><use href="#g54"/></svg><svg class="cg" width="12" height="12"><use href="#g55"/></svg><svg class="cg" width="12" height="12"><use href="#g9"/></svg><svg class="cg" width="12" height="12"><use href="#g51"/></svg><svg class="cg" width="12" height="12"><use href="#g56"/></svg><svg class="cg" width="12" height="12"><use href="#g57"/></svg><svg class="cg" width="12" height="12"><use href="#g50"/></svg><svg class="cg" width="12" height="12"><use href="#g4"/></svg><svg class="cg" width="12" height="12"><use href="#g58"/></svg><svg class="cg" width="12" height="12"><use href="#g59"/></svg></div>

<!-- form layout -->
<div class="a gbar" style="left:661px;top:617px;width:362px;height:15px"></div>
<div class="a" style="left:663px;top:618px;font-size:12px;line-height:13px;color:#D4D0C8;font-weight:bold;white-space:pre"><svg class="cgb" width="13" height="12"><use href="#g60"/></svg><svg class="cgb" width="13" height="12"><use href="#g61"/></svg><svg class="cgb" width="13" height="12"><use href="#g62"/></svg><svg class="cgb" width="13" height="12"><use href="#g63"/></svg></div>
<div class="a btn" style="left:1010px;top:618px;width:13px;height:13px"><svg class="a" style="left:2px;top:2px" width="8" height="7"><path d="M0.5 0.5L7.5 6.5M7.5 0.5L0.5 6.5" stroke="#000" stroke-width="1.5"/></svg></div>
<div class="a" style="left:661px;top:633px;width:362px;height:90px;background:#fff;border-top:1px solid #808080;border-left:1px solid #808080;border-right:1px solid #fff;box-shadow:inset 1px 1px 0 #404040"></div>
<!-- monitor -->
<div class="a" style="left:793px;top:641px;width:100px;height:75px;background:#D4D0C8;border-top:1px solid #D4D0C8;border-left:1px solid #D4D0C8;border-right:1px solid #404040;border-bottom:1px solid #404040;box-shadow:inset 1px 1px 0 #fff, inset -1px -1px 0 #808080"></div>
<div class="a" style="left:800px;top:646px;width:86px;height:65px;background:#3A6EA5;border-top:1px solid #404040;border-left:1px solid #404040;border-right:1px solid #fff;border-bottom:1px solid #fff"></div>
<div class="a" style="left:817px;top:716px;width:51px;height:3px;background:#A0A0A0;border-bottom:1px solid #404040"></div>
<div class="a" style="left:810px;top:654px;width:29px;height:35px;background:#fff;border:1px solid #0A246A;box-shadow:inset 0 0 0 1px #404040"></div>
<div class="a" style="left:812px;top:657px;width:25px;height:3px;background:#808080"></div>
<div class="a m" style="left:818px;top:668px;font-size:11px;line-height:12px;letter-spacing:-0.6px">For</div>

<!-- Taskbar -->
<div class="a" style="left:0;top:722px;width:1024px;height:1px;background:#fff"></div>
<div class="a" style="left:0;top:723px;width:1024px;height:45px;background:#D4D0C8;border-top:1px solid #D4D0C8;box-shadow:inset 0 1px 0 #fff"></div>
<div class="a btn" style="left:2px;top:728px;width:47px;height:38px"></div>
<svg class="a" style="left:3px;top:736px" width="18" height="18" viewBox="0 0 18 18">
<path d="M2 3 q3 -2 7 0 l-1.5 6 q-3 -1.5 -6 0z" fill="#E8501F"/>
<path d="M10 3 q3 1.5 7 0 l-1.5 6 q-3 1.5 -7 0z" fill="#7DB928"/>
<path d="M1 10 q3 -1.5 6 0 l-1.5 6 q-3 -1.5 -6 0z" fill="#3A8FD8"/>
<path d="M8 10 q3 1.5 7 0 l-1.5 6 q-3 1.5 -7 0z" fill="#FBBC09"/>
</svg>
<div class="a" style="left:21px;top:739px;font-size:12px;line-height:13px;white-space:pre"><svg class="cg" width="12" height="12"><use href="#g64"/></svg><svg class="cg" width="12" height="12"><use href="#g65"/></svg></div>
<div class="a chk" style="left:58px;top:728px;width:48px;height:38px;border-top:1px solid #404040;border-left:1px solid #404040;border-right:1px solid #fff;border-bottom:1px solid #fff;box-shadow:inset 1px 1px 0 #808080;background-color:#fff"></div>
<svg class="a" style="left:60px;top:730px" width="44" height="34" viewBox="60 730 44 34">
<path d="M71 735l4 -4h3l3 3v1l-4 3h-3z" fill="#3A7A20" stroke="#1a3a10" stroke-width="0.8"/>
<path d="M66 743l4 -3h3l3 3v1l-4 3h-3z" fill="#C8C060" stroke="#505000" stroke-width="0.8"/>
<path d="M86 762l12 0 -4 -10z" fill="#A0A0A0"/>
<rect x="72.5" y="744.5" width="20" height="17" fill="#fff" stroke="#000"/><path d="M73 745h20v2h-20z" fill="#70B0D0"/>
<text x="80" y="757" font-family="Liberation Sans" font-weight="bold" font-size="11" fill="#000080">32</text>
<path d="M74 752l3 -1.5 4 1.5v6l-4 1.5-3 -1.5z" fill="#A01010" stroke="#400000" stroke-width="0.6"/>
</svg>
<!-- tray -->
<div class="a m" style="left:888px;top:739px;font-size:12px;line-height:12px;letter-spacing:-0.8px">CH</div>
<div class="a sep" style="left:907px;top:734px;height:24px"></div>
<svg class="a" style="left:914px;top:736px" width="20" height="18" viewBox="0 0 20 18"><path d="M9 6 q3 -4 8 -4" fill="none" stroke="#808080"/><rect x="1.5" y="6.5" width="15" height="9" rx="1.5" fill="#D4D0C8" stroke="#808080"/><path d="M4 9h10M4 11h10M6 13h6" stroke="#A0A0A0" stroke-dasharray="1 1"/></svg>
<div class="a sep" style="left:935px;top:734px;height:24px"></div>
<svg class="a" style="left:942px;top:737px" width="17" height="17" viewBox="0 0 17 17"><circle cx="8.5" cy="8.5" r="7.5" fill="#1030A0" stroke="#405080"/><circle cx="7" cy="6" r="4" fill="#3060D0" opacity="0.6"/><text x="5" y="13" font-family="Liberation Sans" font-weight="bold" font-size="11" fill="#fff">?</text></svg>
<div class="a sep" style="left:963px;top:734px;height:24px"></div>
<svg class="a" style="left:969px;top:735px" width="12" height="16" viewBox="0 0 12 16" shape-rendering="crispEdges"><path d="M4.5 1.5h6v4h-6z" fill="none" stroke="#000"/><path d="M1.5 3.5h6v4h-6z" fill="#D4D0C8" stroke="#000"/><path d="M2 2h6v1h-6zM5 0h6v1h-6z" fill="#000"/><path d="M3 11h6l-3 3z" fill="#000"/></svg>
<div class="a" style="left:986px;top:728px;width:37px;height:38px;border-top:1px solid #808080;border-left:1px solid #808080;border-right:1px solid #fff;border-bottom:1px solid #fff"></div>
<svg class="a" style="left:992px;top:740px" width="9" height="10" viewBox="0 0 9 10"><path d="M1 5l3.5-3 3.5 3M1 9l3.5-3 3.5 3" fill="none" stroke="#000" stroke-width="1.6"/></svg>
<svg class="a" style="left:1003px;top:740px" width="18" height="14" viewBox="0 0 18 14"><rect x="1" y="1" width="16" height="11" fill="#2070C0"/><rect x="1" y="1" width="16" height="5" fill="#60A0E0" opacity="0.6"/><path d="M1 12h16" stroke="#303030" stroke-width="1.5"/><path d="M3 11h3" stroke="#fff"/></svg>
</body></html>
